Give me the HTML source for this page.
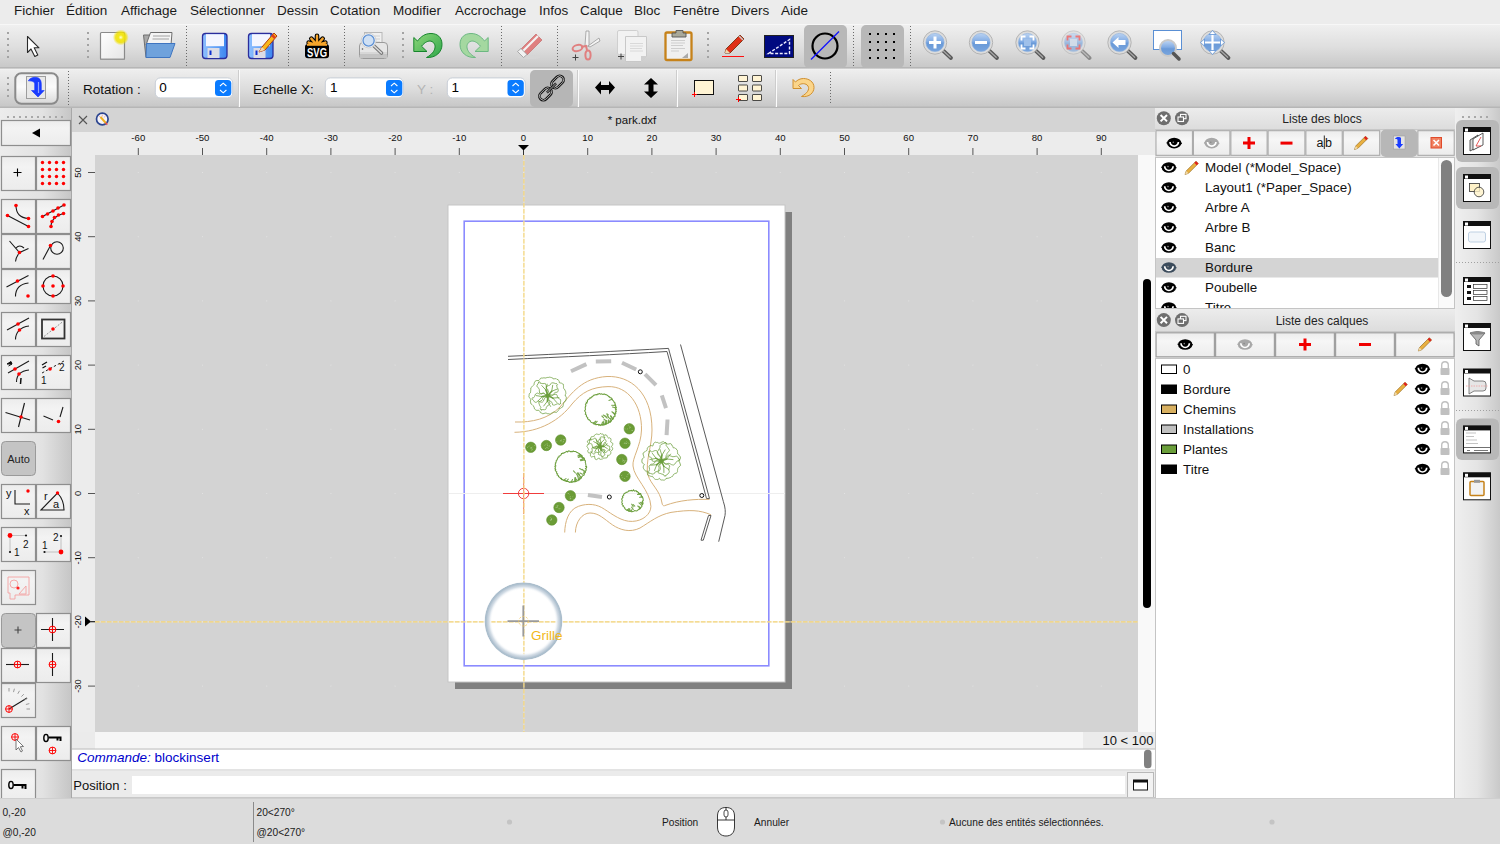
<!DOCTYPE html>
<html><head><meta charset="utf-8">
<style>
*{box-sizing:border-box;margin:0;padding:0}
html,body{width:1500px;height:844px;overflow:hidden;background:#ececec;font-family:"Liberation Sans",sans-serif;color:#000}
.a{position:absolute}
.t{position:absolute;white-space:nowrap}
#menu{left:0;top:0;width:1500px;height:24px;background:#ececec}
#menu span{position:absolute;top:3px;font-size:13.5px;color:#1a1a1a}
#tb1{left:0;top:24px;width:1500px;height:45px;background:linear-gradient(#f7f7f7 0,#f7f7f7 1px,#efefef 1.5px,#dfdfdf 50%,#c9c9c9 calc(100% - 2.5px),#b6b6b6 calc(100% - 1.5px),#b6b6b6 calc(100% - 0.8px),#f4f4f4 100%)}
#tb2{left:0;top:69px;width:1500px;height:39px;background:linear-gradient(#f4f4f4 0,#eeeeee 1px,#dddddd 50%,#c8c8c8 calc(100% - 2px),#b6b6b6 calc(100% - 1px))}
#lt{left:0;top:108px;width:72px;height:692px;background:linear-gradient(90deg,#ececec,#e2e2e2 60%,#c6c6c6);border-right:1px solid #a8a8a8}
#tab{left:72px;top:108px;width:1083px;height:24px;background:#d4d4d4}
#hr{left:72px;top:132px;width:1083px;height:23px;background:#ececec}
#vr{left:72px;top:155px;width:23px;height:577px;background:#ececec}
#cv{left:95px;top:155px;width:1043px;height:577px;background:#d3d3d3;overflow:hidden}
#vsb{left:1138px;top:155px;width:17px;height:577px;background:#f9f9f9}
#hsb{left:72px;top:732px;width:1083px;height:18px;background:#ebebeb}
#cmd{left:72px;top:750px;width:1083px;height:20px;background:#fff;border-top:1px solid #bdbdbd;border-bottom:1px solid #cfcfcf}
#pos{left:72px;top:770px;width:1083px;height:28px;background:#ececec}
#dock{left:1155px;top:108px;width:300px;height:690px;background:#ececec;border-left:1px solid #c8c8c8}
#rtb{left:1455px;top:108px;width:45px;height:690px;background:linear-gradient(90deg,#efefef,#e4e4e4 50%,#c9c9c9)}
#sb{left:0;top:798px;width:1500px;height:46px;background:#dcdcdc;border-top:1px solid #cfcfcf}
</style></head><body>
<div id="menu" class="a">
<span style="left:14px">Fichier</span>
<span style="left:66px">Édition</span>
<span style="left:121px">Affichage</span>
<span style="left:190px">Sélectionner</span>
<span style="left:277px">Dessin</span>
<span style="left:330px">Cotation</span>
<span style="left:393px">Modifier</span>
<span style="left:455px">Accrochage</span>
<span style="left:539px">Infos</span>
<span style="left:580px">Calque</span>
<span style="left:634px">Bloc</span>
<span style="left:673px">Fenêtre</span>
<span style="left:731px">Divers</span>
<span style="left:781px">Aide</span>
</div>
<div id="tb1" class="a"></div>
<div id="tb2" class="a"></div>
<svg class="a" style="left:0;top:0" width="1500" height="107" viewBox="0 0 1500 107">
<defs>
<radialGradient id="glow"><stop offset="0" stop-color="#ffffd8"/><stop offset="0.3" stop-color="#f4e818"/><stop offset="0.65" stop-color="#f0e000" stop-opacity="0.85"/><stop offset="1" stop-color="#f0e000" stop-opacity="0"/></radialGradient>
<linearGradient id="lens" x1="0" y1="0" x2="0" y2="1"><stop offset="0" stop-color="#c2d8f4"/><stop offset="0.45" stop-color="#82ace4"/><stop offset="0.55" stop-color="#6a9ad8"/><stop offset="1" stop-color="#7aa6de"/></linearGradient>
<linearGradient id="flop" x1="0" y1="0" x2="1" y2="0"><stop offset="0" stop-color="#8ec0ff"/><stop offset="1" stop-color="#3c86f0"/></linearGradient>
<linearGradient id="grn" x1="0" y1="0" x2="1" y2="1"><stop offset="0" stop-color="#8fd67a"/><stop offset="1" stop-color="#2ea84a"/></linearGradient>
<linearGradient id="pap" x1="0" y1="0" x2="1" y2="1"><stop offset="0" stop-color="#ffffff"/><stop offset="1" stop-color="#e6e6e6"/></linearGradient>
<g id="mag"><path d="M7.5,7.5 L16,15.5" stroke="#5a5a5a" stroke-width="3.8" stroke-linecap="round"/><path d="M8.5,8.5 L15.2,14.8" stroke="#a8a8a8" stroke-width="1.2" stroke-linecap="round"/><circle cx="0" cy="0" r="10.3" fill="url(#lens)" stroke="#dcdcdc" stroke-width="2.4"/><circle cx="0" cy="0" r="11.7" fill="none" stroke="#a8a8a8" stroke-width="0.8"/><circle cx="0" cy="0" r="9.1" fill="none" stroke="#8ab0e0" stroke-width="0.6"/></g>
</defs>
<!-- toolbar1 handles & separators -->
<g fill="#a3a3a3"><rect x="7" y="32" width="2" height="2"/><rect x="7" y="38" width="2" height="2"/><rect x="7" y="44" width="2" height="2"/><rect x="7" y="50" width="2" height="2"/><rect x="7" y="56" width="2" height="2"/>
<rect x="87" y="32" width="2" height="2"/><rect x="87" y="38" width="2" height="2"/><rect x="87" y="44" width="2" height="2"/><rect x="87" y="50" width="2" height="2"/><rect x="87" y="56" width="2" height="2"/>
<rect x="402" y="32" width="2" height="2"/><rect x="402" y="38" width="2" height="2"/><rect x="402" y="44" width="2" height="2"/><rect x="402" y="50" width="2" height="2"/><rect x="402" y="56" width="2" height="2"/>
<rect x="707" y="32" width="2" height="2"/><rect x="707" y="38" width="2" height="2"/><rect x="707" y="44" width="2" height="2"/><rect x="707" y="50" width="2" height="2"/><rect x="707" y="56" width="2" height="2"/>
<rect x="7" y="77" width="2" height="2"/><rect x="7" y="83" width="2" height="2"/><rect x="7" y="89" width="2" height="2"/><rect x="7" y="95" width="2" height="2"/>
</g>
<g stroke="#6a6a6a" stroke-width="1" stroke-dasharray="1 2">
<path d="M186.5,26 V67"/><path d="M288.5,26 V67"/><path d="M344.5,26 V67"/><path d="M501.5,26 V67"/><path d="M557.5,26 V67"/><path d="M853.5,26 V67"/><path d="M910.5,26 V67"/>
<path d="M68.5,71 V107"/><path d="M830.5,72 V105"/>
</g>
<!-- checked buttons -->
<rect x="804" y="25" width="43" height="43" rx="5" fill="#b8b8b8"/>
<rect x="861" y="25" width="43" height="43" rx="5" fill="#b8b8b8"/>
<!-- cursor -->
<path d="M27.5,36.5 L27.5,52.5 L31,49 L34.8,56.5 L37.8,55 L34.2,47.8 L39,47.8 Z" fill="#fff" stroke="#2a2a2a" stroke-width="1.1" stroke-linejoin="round"/>
<!-- new doc -->
<rect x="100.5" y="32.5" width="24" height="27" rx="1" fill="url(#pap)" stroke="#8a8a8a" stroke-width="1.2"/>
<rect x="100.5" y="58.5" width="24" height="1.5" fill="#999"/>
<circle cx="120.8" cy="37.4" r="8" fill="url(#glow)"/>
<!-- open folder -->
<path d="M143.5,35 L151,35 L151,57.5 L146,57.5 Z" fill="#a8a8a8" stroke="#6e6e6e" stroke-width="1"/>
<path d="M150.5,32.5 L172,32.5 L171,45 L146,45 Z" fill="#f4f4f4" stroke="#6e6e6e" stroke-width="1"/>
<path d="M153,36 H170 M152.5,39 H169" stroke="#bdbdbd" stroke-width="1.3"/>
<path d="M146.5,43.5 L175,43.5 L170,57.5 L146,57.5 Z" fill="#6fa2dc" stroke="#3f75c0" stroke-width="1"/>
<!-- save -->
<g id="flp"><rect x="202.5" y="33.5" width="24.5" height="25" rx="3" fill="url(#flop)" stroke="#2b2d9c" stroke-width="1.3"/>
<rect x="206" y="34.2" width="18" height="12" fill="#f4f6ff"/>
<rect x="207.5" y="48" width="12" height="10" fill="#dcdcE6"/><rect x="209.5" y="50.5" width="2" height="4.5" fill="#1030d0"/>
</g>
<use href="#flp" x="46"/>
<path d="M259,52 L262,47 L274,33 L277,36 L265,50 Z" fill="#f8b81c" stroke="#b23a10" stroke-width="1"/>
<path d="M259,52 L262,47 L265,50 Z" fill="#f0d8b0"/><path d="M272,35 L275,38" stroke="#e04020" stroke-width="2.5"/>
<!-- SVG -->
<g stroke-linecap="round"><path d="M317,45 V35.8 M317,45 L311.3,38.6 M317,45 L322.7,38.6 M317,45 L308.6,42.6 M317,45 L325.4,42.6" stroke="#000" stroke-width="4.6"/>
<path d="M317,45 V35.8 M317,45 L311.3,38.6 M317,45 L322.7,38.6 M317,45 L308.6,42.6 M317,45 L325.4,42.6" stroke="#f7a52b" stroke-width="2.4"/></g>
<rect x="305" y="44" width="24" height="14.3" rx="3" fill="#000"/>
<rect x="307" y="43.8" width="20" height="2" fill="#f7a52b"/>
<text x="317" y="56.8" font-family="Liberation Sans" font-weight="bold" font-size="12" fill="#fff" text-anchor="middle" textLength="20" lengthAdjust="spacingAndGlyphs">SVG</text>
<!-- print preview -->
<rect x="364.5" y="32.5" width="17.5" height="14" fill="#f0f0f0" stroke="#b8b8b8"/>
<path d="M370,36 H380 M370,39 H380 M372,42 H380" stroke="#c8c8c8" stroke-width="0.8"/>
<path d="M359.5,46 Q359.5,42.5 363,42.5 L384,42.5 Q387.5,42.5 387.5,46 L387.5,55.5 Q387.5,58.5 384.5,58.5 L362.5,58.5 Q359.5,58.5 359.5,55.5 Z" fill="#e6e6e6" stroke="#9a9a9a"/>
<path d="M360,53 H387" stroke="#c0c0c0" stroke-width="0.8"/>
<rect x="360" y="54" width="27" height="4" fill="#c4c4c4"/>
<circle cx="362.5" cy="49" r="0.8" fill="#555"/>
<path d="M373.5,45.5 L381.5,53" stroke="#777" stroke-width="3.6" stroke-linecap="round"/>
<path d="M373.5,45.5 L381.5,53" stroke="#ddd" stroke-width="1.4" stroke-linecap="round"/>
<circle cx="368.6" cy="40.5" r="7.4" fill="#f4f4f4" stroke="#c8c8c8" stroke-width="0.8"/>
<circle cx="368.6" cy="40.5" r="5.6" fill="#cfe0f4" stroke="#5b8fd4" stroke-width="1.3"/>
<!-- undo / redo -->
<path d="M413.8,37.5 L413.8,51.5 L427,51.5 L421.5,46.2 C425,42 428.5,40.5 431,41.2 C437,43 437,52 426.5,57.5 C436,58 442,52 442,44.5 C442,37 437,33.5 431,33.5 C425,33.5 421,36.5 417.5,41 Z" fill="url(#grn)" stroke="#16852c" stroke-width="1"/>
<g transform="translate(902,0) scale(-1,1)"><path d="M413.8,37.5 L413.8,51.5 L427,51.5 L421.5,46.2 C425,42 428.5,40.5 431,41.2 C437,43 437,52 426.5,57.5 C436,58 442,52 442,44.5 C442,37 437,33.5 431,33.5 C425,33.5 421,36.5 417.5,41 Z" fill="#a4d8a0" stroke="#6cb882" stroke-width="1"/></g>
<!-- eraser -->
<ellipse cx="529" cy="57" rx="12" ry="2" fill="#d5d5d5"/>
<path d="M521,49 L536,34 L542,40 L527,55 Z" fill="#df8080" stroke="#c06060" stroke-width="0.6"/>
<path d="M523,51 L538,36" stroke="#f4f4f4" stroke-width="2.2"/>
<path d="M517.5,51.5 L521,48.5 L527,54.5 L523.5,57.5 Z" fill="#f2f2f2" stroke="#999" stroke-width="0.8"/>
<!-- cut -->
<path d="M585,46 L586,31 L589,31 L589,46 Z" fill="#f4f4f4" stroke="#9a9a9a" stroke-width="0.8"/>
<path d="M588,46 L599,38 L600,41 L590,47 Z" fill="#f4f4f4" stroke="#9a9a9a" stroke-width="0.8"/>
<ellipse cx="577.5" cy="48" rx="5" ry="3" fill="none" stroke="#e08080" stroke-width="2" transform="rotate(-15 577.5 48)"/>
<ellipse cx="588" cy="55" rx="2.6" ry="4.5" fill="none" stroke="#e08080" stroke-width="2"/>
<path d="M581,47 L586,46 L587,50" stroke="#e08080" stroke-width="2" fill="none"/>
<path d="M572.5,57.5 H578.5 M575.5,54.5 V60.5" stroke="#444" stroke-width="1"/>
<!-- copy -->
<rect x="617.5" y="30.5" width="20.5" height="24" rx="1.5" fill="#f2f2f2" stroke="#cfcfcf"/>
<path d="M626,36.5 H636 M626,42.5 H636" stroke="#ddd" stroke-width="0.6" fill="none"/>
<path d="M625.5,36.5 L646.5,36.5 L646.5,56 L641,61.5 L625.5,61.5 Z" fill="#f2f2f2" stroke="#c8c8c8"/>
<path d="M630,43.5 H643 M630,46 H643 M630,48.5 H642 M630,51 H643" stroke="#d6d6d6" stroke-width="0.9" fill="none"/>
<path d="M641,61.5 L641,56 L646.5,56 Z" fill="#cfcfcf"/>
<path d="M618,56.5 H624 M621,53.5 V59.5" stroke="#444" stroke-width="1"/>
<!-- paste -->
<rect x="665.5" y="32.5" width="26" height="27.5" rx="1.5" fill="#f0f0f0" stroke="#c6821a" stroke-width="2.3"/>
<path d="M676,30.5 H683 V33 H686 V37 H672 V33 H676 Z" fill="#a8a89a" stroke="#555" stroke-width="0.9"/>
<path d="M671,40.5 H685 M671,43 H685 M671,45.5 H683 M671,48.5 H685 M671,51 H679" stroke="#c9c9c9" stroke-width="0.9"/>
<path d="M682,58 L688,53 L688,58 Z" fill="#aaa"/>
<!-- pencil -->
<path d="M725,53 L726,49 L740,35 L744,39 L730,53 Z" fill="#e03018" stroke="#7a3010" stroke-width="0.9"/>
<path d="M725,53 L726,49 L730,53 Z" fill="#f0d8b0"/>
<path d="M739,36 L743,40" stroke="#ccc" stroke-width="1.5"/>
<path d="M722,56.5 H744" stroke="#ff1010" stroke-width="1"/>
<!-- blue box -->
<rect x="764.5" y="35.5" width="29" height="22" fill="#000a80" stroke="#222" stroke-width="1"/>
<path d="M768.5,53.5 L789.5,39.5 L789.5,53.5 Z" fill="none" stroke="#eef" stroke-width="1.4" stroke-dasharray="3 1.6"/>
<!-- circle line -->
<circle cx="825" cy="46" r="12.5" fill="none" stroke="#000" stroke-width="2.2"/>
<path d="M811,59.5 L839,31.5" stroke="#1010ff" stroke-width="1.2"/>
<!-- grid dots -->
<g fill="#000">
<rect x="869" y="33" width="2" height="2"/><rect x="877" y="33" width="2" height="2"/><rect x="885" y="33" width="2" height="2"/><rect x="893" y="33" width="2" height="2"/>
<rect x="869" y="41" width="2" height="2"/><rect x="877" y="41" width="2" height="2"/><rect x="885" y="41" width="2" height="2"/><rect x="893" y="41" width="2" height="2"/>
<rect x="869" y="49" width="2" height="2"/><rect x="877" y="49" width="2" height="2"/><rect x="885" y="49" width="2" height="2"/><rect x="893" y="49" width="2" height="2"/>
<rect x="869" y="57" width="2" height="2"/><rect x="877" y="57" width="2" height="2"/><rect x="885" y="57" width="2" height="2"/><rect x="893" y="57" width="2" height="2"/>
</g>
<!-- zoom icons -->
<g transform="translate(935,42.5)"><use href="#mag"/><path d="M-6,0 H6 M0,-6 V6" stroke="#fff" stroke-width="3"/></g>
<g transform="translate(981,42.5)"><use href="#mag"/><path d="M-6,0 H6" stroke="#fff" stroke-width="3"/></g>
<g transform="translate(1027.5,42.5)"><use href="#mag"/><path d="M-6,-2 V-6 H-2 M2,-6 H6 V-2 M6,2 V6 H2 M-2,6 H-6 V2" stroke="#fff" stroke-width="1.8" fill="none"/><rect x="-3.5" y="-3.5" width="7" height="7" fill="#9fc0ea"/></g>
<g transform="translate(1073.5,42.5)" opacity="0.6"><use href="#mag"/><path d="M-6,-2 V-6 H-2 M2,-6 H6 V-2 M6,2 V6 H2 M-2,6 H-6 V2" stroke="#f03030" stroke-width="1.8" fill="none"/><rect x="-3.5" y="-3.5" width="7" height="7" fill="#c8d8ee"/></g>
<g transform="translate(1119.5,42.5)"><use href="#mag"/><path d="M-7,0 L-1,-5.5 V-2.5 H6 V2.5 H-1 V5.5 Z" fill="#fff"/></g>
<rect x="1153.5" y="30.5" width="28" height="19" fill="#fff" stroke="#5a8fd4" stroke-width="1"/>
<g transform="translate(1168,48)"><circle cx="0" cy="0" r="8" fill="url(#lens)" stroke="#c9c9c9" stroke-width="2"/><path d="M5.5,5.5 L11,11" stroke="#555" stroke-width="3.5" stroke-linecap="round"/></g>
<g transform="translate(1212.5,42.5)"><use href="#mag"/><path d="M-11,0 H11 M0,-11 V11" stroke="#fff" stroke-width="2.2"/><path d="M-12,0 L-8,-3.5 V3.5 Z M12,0 L8,-3.5 V3.5 Z M0,-12 L-3.5,-8 H3.5 Z M0,12 L-3.5,8 H3.5 Z" fill="#fff" stroke="#5b8fd4" stroke-width="0.8"/></g>
</svg>

<svg class="a" style="left:0;top:68px" width="900" height="40" viewBox="0 68 900 40">
<defs>
<linearGradient id="btng" x1="0" y1="0" x2="0" y2="1"><stop offset="0" stop-color="#efefef"/><stop offset="0.45" stop-color="#fbfbfb"/><stop offset="1" stop-color="#d9d9d9"/></linearGradient>
</defs>
<rect x="15.3" y="73.3" width="42.4" height="30.4" rx="6" fill="url(#btng)" stroke="#8a8a8a" stroke-width="2"/>
<rect x="26.5" y="76.5" width="19" height="22" fill="#e8e8e8" stroke="#9d9d9d" stroke-width="1"/>
<path d="M28.3,80.8 C30,77.5 35,76.5 38.5,78 C41,79.5 41.3,82 41.3,85 L41.3,90.5 L44.2,90.5 L38,97 L31.5,90.5 L34.7,90.5 L34.7,84 C34.7,82 33,81 28.3,80.8 Z" fill="#1a3cff" stroke="#1030ff" stroke-width="0.6"/>
<path d="M38.5,82 L38.5,93" stroke="#8fa0ff" stroke-width="1.2"/>
<text x="83" y="93.5" font-family="Liberation Sans" font-size="13.5" fill="#111">Rotation :</text>
<!-- spin 1 -->
<rect x="155.3" y="77.9" width="77.4" height="20" rx="5" fill="#fff" stroke="#c8ced6" stroke-width="1"/>
<rect x="215" y="80" width="16.3" height="16" rx="3.5" fill="#0a7bff"/>
<path d="M220,86 L223.2,83.2 L226.4,86 M220,90 L223.2,92.8 L226.4,90" stroke="#fff" stroke-width="1.1" fill="none"/>
<text x="159.3" y="91.8" font-family="Liberation Sans" font-size="13.5" fill="#000">0</text>
<path d="M238.5,70 V107" stroke="#cdcdcd" stroke-width="1"/><path d="M239.5,70 V107" stroke="#fcfcfc" stroke-width="1"/>
<text x="253" y="93.5" font-family="Liberation Sans" font-size="13.5" fill="#111">Echelle X:</text>
<rect x="325.3" y="77.9" width="78" height="20" rx="5" fill="#fff" stroke="#c8ced6" stroke-width="1"/>
<rect x="386" y="80" width="16.3" height="16" rx="3.5" fill="#0a7bff"/>
<path d="M391,86 L394.2,83.2 L397.4,86 M391,90 L394.2,92.8 L397.4,90" stroke="#fff" stroke-width="1.1" fill="none"/>
<text x="330" y="91.8" font-family="Liberation Sans" font-size="13.5" fill="#000">1</text>
<text x="417" y="93.5" font-family="Liberation Sans" font-size="13.5" fill="#b4b4b4">Y :</text>
<rect x="447.3" y="77.9" width="78" height="20" rx="5" fill="#fff" stroke="#c8ced6" stroke-width="1"/>
<rect x="507.5" y="80" width="16.3" height="16" rx="3.5" fill="#0a7bff"/>
<path d="M512.5,86 L515.7,83.2 L518.9,86 M512.5,90 L515.7,92.8 L518.9,90" stroke="#fff" stroke-width="1.1" fill="none"/>
<text x="451.5" y="91.8" font-family="Liberation Sans" font-size="13.5" fill="#000">1</text>
<!-- link -->
<rect x="530" y="70" width="43" height="37" rx="5" fill="#b6b6b6"/>
<g transform="rotate(-45 551.5 88)" fill="none" stroke="#111">
<rect x="536" y="84" width="14" height="8" rx="4" stroke-width="2.6"/><rect x="536" y="84" width="14" height="8" rx="4" stroke="#b6b6b6" stroke-width="0.9"/>
<rect x="553" y="84" width="14" height="8" rx="4" stroke-width="2.6"/><rect x="553" y="84" width="14" height="8" rx="4" stroke="#b6b6b6" stroke-width="0.9"/>
<path d="M545,88 H558" stroke-width="2.4"/><path d="M545,88 H558" stroke="#b6b6b6" stroke-width="0.9"/>
</g>
<path d="M577.5,70 V107 M676.5,70 V107 M775.5,70 V107" stroke="#cdcdcd" stroke-width="1"/><path d="M578.5,70 V107 M677.5,70 V107 M776.5,70 V107" stroke="#fcfcfc" stroke-width="1"/>
<!-- arrows -->
<path d="M595,87.5 L601,81 L601,85 L609,85 L609,81 L615,87.5 L609,94.5 L609,90 L601,90 L601,94.5 Z" fill="#000"/>
<path d="M651,78 L658,84.5 L653.5,84.5 L653.5,91.5 L658,91.5 L651,98 L644,91.5 L648.5,91.5 L648.5,84.5 L644,84.5 Z" fill="#000"/>
<!-- rect icon -->
<rect x="694.5" y="80.5" width="19" height="14" fill="#fff4d4" stroke="#111" stroke-width="1"/>
<path d="M692,94.5 H697 M694.5,92 V97" stroke="#ff0000" stroke-width="1"/>
<!-- grid icon -->
<g fill="#fff4d4" stroke="#222" stroke-width="0.8">
<rect x="738.5" y="75.5" width="9" height="6" rx="0.5"/><rect x="752.5" y="75.5" width="9" height="6" rx="0.5"/>
<rect x="738.5" y="85" width="9" height="6" rx="0.5"/><rect x="752.5" y="85" width="9" height="6" rx="0.5"/>
<rect x="738.5" y="94.5" width="9" height="6" rx="0.5"/><rect x="752.5" y="94.5" width="9" height="6" rx="0.5"/>
</g>
<path d="M736,99.5 H741 M738.5,97 V102" stroke="#ff0000" stroke-width="1"/>
<!-- orange undo -->
<path d="M793,79.5 L793,88.5 L801.5,88.5 L798.5,85.5 C801,83 806,83 808,86 C810,89.5 807,93.5 801.5,96.5 C809.5,97.5 814,92.5 814,87.5 C814,81.5 808.5,78.5 803.5,78.5 C800,78.5 797.5,80 795.5,82 Z" fill="#fbd58a" stroke="#d09030" stroke-width="1"/>
</svg>

<div id="lt" class="a"></div>
<svg class="a" style="left:0;top:107px" width="72" height="693" viewBox="0 107 72 693">
<defs>
<linearGradient id="bg1" x1="0" y1="0" x2="0" y2="1"><stop offset="0" stop-color="#ececec"/><stop offset="0.3" stop-color="#f3f3f3"/><stop offset="1" stop-color="#ececec"/></linearGradient>
<g id="rc"><circle cx="0" cy="0" r="3.4" fill="none" stroke="#ff0000" stroke-width="1"/><path d="M-3.4,0 H3.4 M0,-3.4 V3.4" stroke="#ff0000" stroke-width="0.9"/></g>
</defs>
<g fill="#a8a8a8"><rect x="7" y="116" width="2" height="2"/><rect x="13" y="116" width="2" height="2"/><rect x="19" y="116" width="2" height="2"/><rect x="25" y="116" width="2" height="2"/><rect x="31" y="116" width="2" height="2"/><rect x="37" y="116" width="2" height="2"/><rect x="43" y="116" width="2" height="2"/><rect x="49" y="116" width="2" height="2"/><rect x="55" y="116" width="2" height="2"/><rect x="61" y="116" width="2" height="2"/></g>
<g fill="url(#bg1)" stroke="#8e8e8e" stroke-width="1.2">
<rect x="1.5" y="120.5" width="69" height="25"/>
<rect x="1.5" y="156.5" width="34" height="34"/><rect x="36.5" y="156.5" width="34" height="34"/>
<rect x="1.5" y="199.5" width="34" height="34"/><rect x="36.5" y="199.5" width="34" height="34"/>
<rect x="1.5" y="234.5" width="34" height="34"/><rect x="36.5" y="234.5" width="34" height="34"/>
<rect x="1.5" y="269.5" width="34" height="34"/><rect x="36.5" y="269.5" width="34" height="34"/>
<rect x="1.5" y="312.5" width="34" height="34"/><rect x="36.5" y="312.5" width="34" height="34"/>
<rect x="1.5" y="355.5" width="34" height="34"/><rect x="36.5" y="355.5" width="34" height="34"/>
<rect x="1.5" y="398.5" width="34" height="34"/><rect x="36.5" y="398.5" width="34" height="34"/>
<rect x="1.5" y="484.5" width="34" height="34"/><rect x="36.5" y="484.5" width="34" height="34"/>
<rect x="1.5" y="527.5" width="34" height="34"/><rect x="36.5" y="527.5" width="34" height="34"/>
<rect x="1.5" y="570.5" width="34" height="34"/>
<rect x="36.5" y="613.5" width="34" height="34"/>
<rect x="1.5" y="648.5" width="34" height="34"/><rect x="36.5" y="648.5" width="34" height="34"/>
<rect x="1.5" y="683.5" width="34" height="34"/>
<rect x="1.5" y="726.5" width="34" height="34"/><rect x="36.5" y="726.5" width="34" height="34"/>
<rect x="1.5" y="769.5" width="34" height="34"/>
</g>
<rect x="1.5" y="441.5" width="34" height="34" rx="4" fill="#c4c4c4" stroke="#9a9a9a" stroke-width="1"/>
<rect x="1.5" y="613.5" width="34" height="34" rx="4" fill="#c4c4c4" stroke="#9a9a9a" stroke-width="1"/>
<text x="18.5" y="462.5" font-family="Liberation Sans" font-size="11" fill="#222" text-anchor="middle">Auto</text>
<path d="M32,133 L40,128.5 L40,137.5 Z" fill="#000"/>
<path d="M13.5,172.5 H21.5 M17.5,168.5 V176.5" stroke="#000" stroke-width="1.1"/>
<g fill="#ff0000">
<circle cx="42.5" cy="162.5" r="1.7"/><circle cx="49.5" cy="162.5" r="1.7"/><circle cx="56.5" cy="162.5" r="1.7"/><circle cx="63.5" cy="162.5" r="1.7"/>
<circle cx="42.5" cy="169.5" r="1.7"/><circle cx="49.5" cy="169.5" r="1.7"/><circle cx="56.5" cy="169.5" r="1.7"/><circle cx="63.5" cy="169.5" r="1.7"/>
<circle cx="42.5" cy="176.5" r="1.7"/><circle cx="49.5" cy="176.5" r="1.7"/><circle cx="56.5" cy="176.5" r="1.7"/><circle cx="63.5" cy="176.5" r="1.7"/>
<circle cx="42.5" cy="183.5" r="1.7"/><circle cx="49.5" cy="183.5" r="1.7"/><circle cx="56.5" cy="183.5" r="1.7"/><circle cx="63.5" cy="183.5" r="1.7"/>
</g>
<g stroke="#1a1a1a" stroke-width="1.1" fill="none">
<path d="M7.5,215.5 L28.5,226.5"/><path d="M16,205.5 C16,214 21,218 28.5,218.5"/>
<path d="M42.5,216.5 L64,205"/><path d="M51,226.5 C51,220 56,215 63.5,213.5"/>
<path d="M9.5,241 L19.5,252.5 L28.5,248.5"/><path d="M19.5,252.5 Q16,257 15.5,261.5"/><path d="M16,248 Q19.5,244 24,248"/>
<circle cx="57" cy="248" r="6.3"/><path d="M43,259.5 L50.5,245.5"/>
<path d="M6.5,287 L28.5,275.5"/><path d="M15.5,296.5 C15.5,289 20,284 28.5,283"/>
<circle cx="53" cy="286" r="10"/>
<path d="M7,330 L29,318"/><path d="M15.5,339.5 C15.5,333 20,327 29,326"/>
<path d="M8,373 L29,361"/><path d="M16.5,382 C16.5,376 20,371 29,370"/>
<path d="M5.5,412.5 L30,420"/><path d="M24.5,403 L18.5,427"/>
<path d="M43.5,416 L53,420"/><path d="M63,407 L60,417"/>
<path d="M15,490 V504 H30"/>
<path d="M41,510 L57.5,493 Q64,500 64,510 Z"/>
<path d="M6,664.5 H29"/><path d="M52.5,653 V676"/>
<path d="M41,629.5 H64 M52.5,618 V641"/>
<path d="M9,709 L27,698"/>
</g>
<rect x="42" y="319.5" width="22.5" height="19" fill="none" stroke="#333" stroke-width="1.8"/>
<path d="M44,336.5 L63,321.5" stroke="#777" stroke-width="0.8" stroke-dasharray="2 1.5"/>
<path d="M42,373 L64,361" stroke="#222" stroke-width="1" stroke-dasharray="2.5 2"/>
<path d="M7,364 L11,361.5 L12,364 Z M8.5,366 L12,364" fill="#111" stroke="#111" stroke-width="1"/>
<path d="M20.5,384 L21,378" stroke="#111" stroke-width="1.5"/>
<path d="M42,365 L47,362 M42.5,368 L46,366" stroke="#111" stroke-width="1.3"/>
<text x="41" y="384" font-family="Liberation Sans" font-size="10" fill="#111">1</text>
<text x="59" y="371" font-family="Liberation Sans" font-size="10" fill="#111">2</text>
<g fill="#ff0000">
<circle cx="16" cy="205.5" r="1.8"/><circle cx="28.5" cy="218.5" r="1.8"/><circle cx="7.5" cy="215.5" r="1.8"/><circle cx="28.5" cy="226.5" r="1.8"/>
<circle cx="42.5" cy="216.5" r="1.8"/><circle cx="47.5" cy="214" r="1.8"/><circle cx="53" cy="211" r="1.8"/><circle cx="58" cy="208" r="1.8"/><circle cx="64" cy="205" r="1.8"/>
<circle cx="51" cy="226.5" r="1.8"/><circle cx="52" cy="221.5" r="1.8"/><circle cx="54.5" cy="217.5" r="1.8"/><circle cx="58.5" cy="215" r="1.8"/><circle cx="63.5" cy="213.5" r="1.8"/>
<circle cx="19.5" cy="252.5" r="1.8"/><circle cx="50.5" cy="245.5" r="1.8"/>
<circle cx="17.5" cy="281" r="1.8"/><circle cx="28" cy="296" r="1.8"/>
<circle cx="53" cy="286" r="1.8"/><circle cx="43" cy="286" r="1.8"/><circle cx="63" cy="286" r="1.8"/><circle cx="53" cy="276" r="1.8"/><circle cx="53" cy="296" r="1.8"/>
<circle cx="18" cy="324" r="1.8"/><circle cx="19.5" cy="330" r="1.8"/>
<circle cx="53" cy="329" r="1.8"/>
<circle cx="15" cy="369" r="1.8"/><circle cx="19" cy="374" r="1.8"/>
<circle cx="50" cy="369" r="1.8"/>
<circle cx="21" cy="417" r="1.8"/><circle cx="58.5" cy="421.5" r="1.8"/>
<circle cx="28" cy="491" r="1.7"/><circle cx="57.5" cy="493" r="1.7"/>
</g>
<text x="6" y="497" font-family="Liberation Sans" font-size="11" fill="#111">y</text>
<text x="24" y="515" font-family="Liberation Sans" font-size="11" fill="#111">x</text>
<text x="44" y="500" font-family="Liberation Sans" font-size="11" fill="#111">r</text>
<text x="53" y="507.5" font-family="Liberation Sans" font-size="11" fill="#111">a</text>
<path d="M10,535.5 H26 M10,535.5 V552" fill="none" stroke="#bbb" stroke-width="0.9"/><path d="M44.5,552 H61 V536" fill="none" stroke="#bbb" stroke-width="0.9"/>
<circle cx="10" cy="535.5" r="2.4" fill="#ff0000"/><circle cx="61" cy="552" r="2.4" fill="#ff0000"/>
<g fill="#111"><circle cx="26" cy="535.5" r="1.1"/><circle cx="10" cy="552" r="1.1"/><circle cx="61" cy="536" r="1.1"/><circle cx="44.5" cy="552" r="1.1"/></g>
<text x="23" y="548" font-family="Liberation Sans" font-size="10" fill="#111">2</text>
<text x="14" y="556" font-family="Liberation Sans" font-size="10" fill="#111">1</text>
<text x="53" y="541" font-family="Liberation Sans" font-size="10" fill="#111">2</text>
<text x="42" y="549" font-family="Liberation Sans" font-size="10" fill="#111">1</text>
<g fill="none" stroke="#f4a0a0" stroke-width="0.9"><path d="M8,577 H29 V595 H15 V599 H10 V593 H8 Z"/><circle cx="14" cy="584" r="4"/><path d="M19,594 L26,586 V594 Z"/></g>
<circle cx="18" cy="588" r="1.6" fill="#ff2020"/>
<path d="M14.5,630 H21.5 M18,626.5 V633.5" stroke="#444" stroke-width="1.1"/>
<use href="#rc" x="52.5" y="629.5"/><use href="#rc" x="17.5" y="664.5"/><use href="#rc" x="52.5" y="664.5"/>
<g stroke="#9a9a9a" stroke-width="1"><path d="M9.0,691.5 L9.0,688.0 M13.5,692.1 L14.4,688.7 M17.8,693.8 L19.5,690.8 M21.4,696.6 L23.8,694.2 M24.2,700.2 L27.2,698.5 M25.9,704.5 L29.3,703.6 M26.5,709.0 L30.0,709.0"/></g>
<use href="#rc" x="9" y="709"/>
<use href="#rc" x="15" y="737"/>
<path d="M16,739 L16,750 L18.5,747.5 L21,752 L22.5,751 L20.3,746.7 L23.5,746.5 Z" fill="#fff" stroke="#555" stroke-width="0.8"/>
<g fill="none" stroke="#000"><ellipse cx="46" cy="738" rx="2.2" ry="3.6" stroke-width="1.4"/><path d="M48.5,737.5 H60.5 V741 M57.5,737.5 V740.5" stroke-width="2"/></g>
<use href="#rc" x="52.5" y="750.5"/>
<g fill="none" stroke="#000"><ellipse cx="11" cy="785" rx="2.2" ry="3.6" stroke-width="1.4"/><path d="M13.5,785 H25.5 V789 M22.5,785 V788.5" stroke-width="2"/></g>
</svg>

<div id="tab" class="a"></div>
<div id="hr" class="a"></div>
<div id="vr" class="a"></div>
<div id="cv" class="a"></div>
<div id="vsb" class="a"></div>
<div id="hsb" class="a"></div>
<div id="cmd" class="a"></div>
<div id="pos" class="a"></div>
<svg class="a" style="left:72px;top:107px" width="1083" height="693" viewBox="72 107 1083 693">
<defs><radialGradient id="magr" cx="0.5" cy="0.5" r="0.5"><stop offset="0" stop-color="#fff" stop-opacity="0"/><stop offset="0.8" stop-color="#fff" stop-opacity="0"/><stop offset="0.85" stop-color="#eef2f6" stop-opacity="0.85"/><stop offset="0.89" stop-color="#d2dce5"/><stop offset="0.92" stop-color="#c4d0dc"/><stop offset="0.95" stop-color="#b0c2d0"/><stop offset="0.98" stop-color="#a9bccb"/><stop offset="1" stop-color="#c0ccd8" stop-opacity="0.5"/></radialGradient>
<clipPath id="cvclip"><rect x="95" y="155" width="1043" height="577"/></clipPath></defs>
<path d="M79,116 L87,124 M87,116 L79,124" stroke="#555" stroke-width="1.1"/>
<circle cx="102.3" cy="119" r="5.8" fill="#f4f4f8" stroke="#2c4590" stroke-width="1.7"/><path d="M99,116 L101,117.5 M102.3,114.5 V116.5 M105.5,116 L103.8,117.5" stroke="#d88" stroke-width="0.6"/><path d="M100.5,117 L105.8,123" stroke="#f0b020" stroke-width="2"/><path d="M105.5,122.7 L107.3,124.6" stroke="#e05050" stroke-width="1.6"/>
<text x="632" y="123.5" font-family="Liberation Sans" font-size="11.5" text-anchor="middle" fill="#111">* park.dxf</text>
<path d="M138.3,148 V155" stroke="#555" stroke-width="1"/>
<text x="138.3" y="141.3" font-family="Liberation Sans" font-size="9.6" text-anchor="middle" fill="#111">-60</text>
<path d="M202.5,148 V155" stroke="#555" stroke-width="1"/>
<text x="202.5" y="141.3" font-family="Liberation Sans" font-size="9.6" text-anchor="middle" fill="#111">-50</text>
<path d="M266.7,148 V155" stroke="#555" stroke-width="1"/>
<text x="266.7" y="141.3" font-family="Liberation Sans" font-size="9.6" text-anchor="middle" fill="#111">-40</text>
<path d="M330.9,148 V155" stroke="#555" stroke-width="1"/>
<text x="330.9" y="141.3" font-family="Liberation Sans" font-size="9.6" text-anchor="middle" fill="#111">-30</text>
<path d="M395.1,148 V155" stroke="#555" stroke-width="1"/>
<text x="395.1" y="141.3" font-family="Liberation Sans" font-size="9.6" text-anchor="middle" fill="#111">-20</text>
<path d="M459.3,148 V155" stroke="#555" stroke-width="1"/>
<text x="459.3" y="141.3" font-family="Liberation Sans" font-size="9.6" text-anchor="middle" fill="#111">-10</text>
<path d="M523.5,148 V155" stroke="#555" stroke-width="1"/>
<text x="523.5" y="141.3" font-family="Liberation Sans" font-size="9.6" text-anchor="middle" fill="#111">0</text>
<path d="M587.7,148 V155" stroke="#555" stroke-width="1"/>
<text x="587.7" y="141.3" font-family="Liberation Sans" font-size="9.6" text-anchor="middle" fill="#111">10</text>
<path d="M651.9,148 V155" stroke="#555" stroke-width="1"/>
<text x="651.9" y="141.3" font-family="Liberation Sans" font-size="9.6" text-anchor="middle" fill="#111">20</text>
<path d="M716.1,148 V155" stroke="#555" stroke-width="1"/>
<text x="716.1" y="141.3" font-family="Liberation Sans" font-size="9.6" text-anchor="middle" fill="#111">30</text>
<path d="M780.3,148 V155" stroke="#555" stroke-width="1"/>
<text x="780.3" y="141.3" font-family="Liberation Sans" font-size="9.6" text-anchor="middle" fill="#111">40</text>
<path d="M844.5,148 V155" stroke="#555" stroke-width="1"/>
<text x="844.5" y="141.3" font-family="Liberation Sans" font-size="9.6" text-anchor="middle" fill="#111">50</text>
<path d="M908.7,148 V155" stroke="#555" stroke-width="1"/>
<text x="908.7" y="141.3" font-family="Liberation Sans" font-size="9.6" text-anchor="middle" fill="#111">60</text>
<path d="M972.9,148 V155" stroke="#555" stroke-width="1"/>
<text x="972.9" y="141.3" font-family="Liberation Sans" font-size="9.6" text-anchor="middle" fill="#111">70</text>
<path d="M1037.1,148 V155" stroke="#555" stroke-width="1"/>
<text x="1037.1" y="141.3" font-family="Liberation Sans" font-size="9.6" text-anchor="middle" fill="#111">80</text>
<path d="M1101.3,148 V155" stroke="#555" stroke-width="1"/>
<text x="1101.3" y="141.3" font-family="Liberation Sans" font-size="9.6" text-anchor="middle" fill="#111">90</text>
<path d="M518,145 L529,145 L523.5,150.5 Z" fill="#000"/><path d="M523.5,150 V155" stroke="#333"/>
<path d="M88,686.1 H95" stroke="#555" stroke-width="1"/>
<text transform="translate(81.2,686.1) rotate(-90)" font-family="Liberation Sans" font-size="9.3" text-anchor="middle" fill="#111">-30</text>
<path d="M88,621.9 H95" stroke="#555" stroke-width="1"/>
<text transform="translate(81.2,621.9) rotate(-90)" font-family="Liberation Sans" font-size="9.3" text-anchor="middle" fill="#111">-20</text>
<path d="M88,557.7 H95" stroke="#555" stroke-width="1"/>
<text transform="translate(81.2,557.7) rotate(-90)" font-family="Liberation Sans" font-size="9.3" text-anchor="middle" fill="#111">-10</text>
<path d="M88,493.5 H95" stroke="#555" stroke-width="1"/>
<text transform="translate(81.2,493.5) rotate(-90)" font-family="Liberation Sans" font-size="9.3" text-anchor="middle" fill="#111">0</text>
<path d="M88,429.3 H95" stroke="#555" stroke-width="1"/>
<text transform="translate(81.2,429.3) rotate(-90)" font-family="Liberation Sans" font-size="9.3" text-anchor="middle" fill="#111">10</text>
<path d="M88,365.1 H95" stroke="#555" stroke-width="1"/>
<text transform="translate(81.2,365.1) rotate(-90)" font-family="Liberation Sans" font-size="9.3" text-anchor="middle" fill="#111">20</text>
<path d="M88,300.9 H95" stroke="#555" stroke-width="1"/>
<text transform="translate(81.2,300.9) rotate(-90)" font-family="Liberation Sans" font-size="9.3" text-anchor="middle" fill="#111">30</text>
<path d="M88,236.7 H95" stroke="#555" stroke-width="1"/>
<text transform="translate(81.2,236.7) rotate(-90)" font-family="Liberation Sans" font-size="9.3" text-anchor="middle" fill="#111">40</text>
<path d="M88,172.5 H95" stroke="#555" stroke-width="1"/>
<text transform="translate(81.2,172.5) rotate(-90)" font-family="Liberation Sans" font-size="9.3" text-anchor="middle" fill="#111">50</text>
<path d="M85,616.5 L91,621.5 L85,626.5 Z" fill="#000"/><path d="M90,621.5 H95" stroke="#333"/>
<g clip-path="url(#cvclip)">
<rect x="137.8" y="685.6" width="1" height="1" fill="#e2e2e2"/>
<rect x="137.8" y="621.4" width="1" height="1" fill="#e2e2e2"/>
<rect x="137.8" y="557.2" width="1" height="1" fill="#e2e2e2"/>
<rect x="137.8" y="493.0" width="1" height="1" fill="#e2e2e2"/>
<rect x="137.8" y="428.8" width="1" height="1" fill="#e2e2e2"/>
<rect x="137.8" y="364.6" width="1" height="1" fill="#e2e2e2"/>
<rect x="137.8" y="300.4" width="1" height="1" fill="#e2e2e2"/>
<rect x="137.8" y="236.2" width="1" height="1" fill="#e2e2e2"/>
<rect x="137.8" y="172.0" width="1" height="1" fill="#e2e2e2"/>
<rect x="202.0" y="685.6" width="1" height="1" fill="#e2e2e2"/>
<rect x="202.0" y="621.4" width="1" height="1" fill="#e2e2e2"/>
<rect x="202.0" y="557.2" width="1" height="1" fill="#e2e2e2"/>
<rect x="202.0" y="493.0" width="1" height="1" fill="#e2e2e2"/>
<rect x="202.0" y="428.8" width="1" height="1" fill="#e2e2e2"/>
<rect x="202.0" y="364.6" width="1" height="1" fill="#e2e2e2"/>
<rect x="202.0" y="300.4" width="1" height="1" fill="#e2e2e2"/>
<rect x="202.0" y="236.2" width="1" height="1" fill="#e2e2e2"/>
<rect x="202.0" y="172.0" width="1" height="1" fill="#e2e2e2"/>
<rect x="266.2" y="685.6" width="1" height="1" fill="#e2e2e2"/>
<rect x="266.2" y="621.4" width="1" height="1" fill="#e2e2e2"/>
<rect x="266.2" y="557.2" width="1" height="1" fill="#e2e2e2"/>
<rect x="266.2" y="493.0" width="1" height="1" fill="#e2e2e2"/>
<rect x="266.2" y="428.8" width="1" height="1" fill="#e2e2e2"/>
<rect x="266.2" y="364.6" width="1" height="1" fill="#e2e2e2"/>
<rect x="266.2" y="300.4" width="1" height="1" fill="#e2e2e2"/>
<rect x="266.2" y="236.2" width="1" height="1" fill="#e2e2e2"/>
<rect x="266.2" y="172.0" width="1" height="1" fill="#e2e2e2"/>
<rect x="330.4" y="685.6" width="1" height="1" fill="#e2e2e2"/>
<rect x="330.4" y="621.4" width="1" height="1" fill="#e2e2e2"/>
<rect x="330.4" y="557.2" width="1" height="1" fill="#e2e2e2"/>
<rect x="330.4" y="493.0" width="1" height="1" fill="#e2e2e2"/>
<rect x="330.4" y="428.8" width="1" height="1" fill="#e2e2e2"/>
<rect x="330.4" y="364.6" width="1" height="1" fill="#e2e2e2"/>
<rect x="330.4" y="300.4" width="1" height="1" fill="#e2e2e2"/>
<rect x="330.4" y="236.2" width="1" height="1" fill="#e2e2e2"/>
<rect x="330.4" y="172.0" width="1" height="1" fill="#e2e2e2"/>
<rect x="394.6" y="685.6" width="1" height="1" fill="#e2e2e2"/>
<rect x="394.6" y="621.4" width="1" height="1" fill="#e2e2e2"/>
<rect x="394.6" y="557.2" width="1" height="1" fill="#e2e2e2"/>
<rect x="394.6" y="493.0" width="1" height="1" fill="#e2e2e2"/>
<rect x="394.6" y="428.8" width="1" height="1" fill="#e2e2e2"/>
<rect x="394.6" y="364.6" width="1" height="1" fill="#e2e2e2"/>
<rect x="394.6" y="300.4" width="1" height="1" fill="#e2e2e2"/>
<rect x="394.6" y="236.2" width="1" height="1" fill="#e2e2e2"/>
<rect x="394.6" y="172.0" width="1" height="1" fill="#e2e2e2"/>
<rect x="458.8" y="685.6" width="1" height="1" fill="#e2e2e2"/>
<rect x="458.8" y="621.4" width="1" height="1" fill="#e2e2e2"/>
<rect x="458.8" y="557.2" width="1" height="1" fill="#e2e2e2"/>
<rect x="458.8" y="493.0" width="1" height="1" fill="#e2e2e2"/>
<rect x="458.8" y="428.8" width="1" height="1" fill="#e2e2e2"/>
<rect x="458.8" y="364.6" width="1" height="1" fill="#e2e2e2"/>
<rect x="458.8" y="300.4" width="1" height="1" fill="#e2e2e2"/>
<rect x="458.8" y="236.2" width="1" height="1" fill="#e2e2e2"/>
<rect x="458.8" y="172.0" width="1" height="1" fill="#e2e2e2"/>
<rect x="523.0" y="685.6" width="1" height="1" fill="#e2e2e2"/>
<rect x="523.0" y="621.4" width="1" height="1" fill="#e2e2e2"/>
<rect x="523.0" y="557.2" width="1" height="1" fill="#e2e2e2"/>
<rect x="523.0" y="493.0" width="1" height="1" fill="#e2e2e2"/>
<rect x="523.0" y="428.8" width="1" height="1" fill="#e2e2e2"/>
<rect x="523.0" y="364.6" width="1" height="1" fill="#e2e2e2"/>
<rect x="523.0" y="300.4" width="1" height="1" fill="#e2e2e2"/>
<rect x="523.0" y="236.2" width="1" height="1" fill="#e2e2e2"/>
<rect x="523.0" y="172.0" width="1" height="1" fill="#e2e2e2"/>
<rect x="587.2" y="685.6" width="1" height="1" fill="#e2e2e2"/>
<rect x="587.2" y="621.4" width="1" height="1" fill="#e2e2e2"/>
<rect x="587.2" y="557.2" width="1" height="1" fill="#e2e2e2"/>
<rect x="587.2" y="493.0" width="1" height="1" fill="#e2e2e2"/>
<rect x="587.2" y="428.8" width="1" height="1" fill="#e2e2e2"/>
<rect x="587.2" y="364.6" width="1" height="1" fill="#e2e2e2"/>
<rect x="587.2" y="300.4" width="1" height="1" fill="#e2e2e2"/>
<rect x="587.2" y="236.2" width="1" height="1" fill="#e2e2e2"/>
<rect x="587.2" y="172.0" width="1" height="1" fill="#e2e2e2"/>
<rect x="651.4" y="685.6" width="1" height="1" fill="#e2e2e2"/>
<rect x="651.4" y="621.4" width="1" height="1" fill="#e2e2e2"/>
<rect x="651.4" y="557.2" width="1" height="1" fill="#e2e2e2"/>
<rect x="651.4" y="493.0" width="1" height="1" fill="#e2e2e2"/>
<rect x="651.4" y="428.8" width="1" height="1" fill="#e2e2e2"/>
<rect x="651.4" y="364.6" width="1" height="1" fill="#e2e2e2"/>
<rect x="651.4" y="300.4" width="1" height="1" fill="#e2e2e2"/>
<rect x="651.4" y="236.2" width="1" height="1" fill="#e2e2e2"/>
<rect x="651.4" y="172.0" width="1" height="1" fill="#e2e2e2"/>
<rect x="715.6" y="685.6" width="1" height="1" fill="#e2e2e2"/>
<rect x="715.6" y="621.4" width="1" height="1" fill="#e2e2e2"/>
<rect x="715.6" y="557.2" width="1" height="1" fill="#e2e2e2"/>
<rect x="715.6" y="493.0" width="1" height="1" fill="#e2e2e2"/>
<rect x="715.6" y="428.8" width="1" height="1" fill="#e2e2e2"/>
<rect x="715.6" y="364.6" width="1" height="1" fill="#e2e2e2"/>
<rect x="715.6" y="300.4" width="1" height="1" fill="#e2e2e2"/>
<rect x="715.6" y="236.2" width="1" height="1" fill="#e2e2e2"/>
<rect x="715.6" y="172.0" width="1" height="1" fill="#e2e2e2"/>
<rect x="779.8" y="685.6" width="1" height="1" fill="#e2e2e2"/>
<rect x="779.8" y="621.4" width="1" height="1" fill="#e2e2e2"/>
<rect x="779.8" y="557.2" width="1" height="1" fill="#e2e2e2"/>
<rect x="779.8" y="493.0" width="1" height="1" fill="#e2e2e2"/>
<rect x="779.8" y="428.8" width="1" height="1" fill="#e2e2e2"/>
<rect x="779.8" y="364.6" width="1" height="1" fill="#e2e2e2"/>
<rect x="779.8" y="300.4" width="1" height="1" fill="#e2e2e2"/>
<rect x="779.8" y="236.2" width="1" height="1" fill="#e2e2e2"/>
<rect x="779.8" y="172.0" width="1" height="1" fill="#e2e2e2"/>
<rect x="844.0" y="685.6" width="1" height="1" fill="#e2e2e2"/>
<rect x="844.0" y="621.4" width="1" height="1" fill="#e2e2e2"/>
<rect x="844.0" y="557.2" width="1" height="1" fill="#e2e2e2"/>
<rect x="844.0" y="493.0" width="1" height="1" fill="#e2e2e2"/>
<rect x="844.0" y="428.8" width="1" height="1" fill="#e2e2e2"/>
<rect x="844.0" y="364.6" width="1" height="1" fill="#e2e2e2"/>
<rect x="844.0" y="300.4" width="1" height="1" fill="#e2e2e2"/>
<rect x="844.0" y="236.2" width="1" height="1" fill="#e2e2e2"/>
<rect x="844.0" y="172.0" width="1" height="1" fill="#e2e2e2"/>
<rect x="908.2" y="685.6" width="1" height="1" fill="#e2e2e2"/>
<rect x="908.2" y="621.4" width="1" height="1" fill="#e2e2e2"/>
<rect x="908.2" y="557.2" width="1" height="1" fill="#e2e2e2"/>
<rect x="908.2" y="493.0" width="1" height="1" fill="#e2e2e2"/>
<rect x="908.2" y="428.8" width="1" height="1" fill="#e2e2e2"/>
<rect x="908.2" y="364.6" width="1" height="1" fill="#e2e2e2"/>
<rect x="908.2" y="300.4" width="1" height="1" fill="#e2e2e2"/>
<rect x="908.2" y="236.2" width="1" height="1" fill="#e2e2e2"/>
<rect x="908.2" y="172.0" width="1" height="1" fill="#e2e2e2"/>
<rect x="972.4" y="685.6" width="1" height="1" fill="#e2e2e2"/>
<rect x="972.4" y="621.4" width="1" height="1" fill="#e2e2e2"/>
<rect x="972.4" y="557.2" width="1" height="1" fill="#e2e2e2"/>
<rect x="972.4" y="493.0" width="1" height="1" fill="#e2e2e2"/>
<rect x="972.4" y="428.8" width="1" height="1" fill="#e2e2e2"/>
<rect x="972.4" y="364.6" width="1" height="1" fill="#e2e2e2"/>
<rect x="972.4" y="300.4" width="1" height="1" fill="#e2e2e2"/>
<rect x="972.4" y="236.2" width="1" height="1" fill="#e2e2e2"/>
<rect x="972.4" y="172.0" width="1" height="1" fill="#e2e2e2"/>
<rect x="1036.6" y="685.6" width="1" height="1" fill="#e2e2e2"/>
<rect x="1036.6" y="621.4" width="1" height="1" fill="#e2e2e2"/>
<rect x="1036.6" y="557.2" width="1" height="1" fill="#e2e2e2"/>
<rect x="1036.6" y="493.0" width="1" height="1" fill="#e2e2e2"/>
<rect x="1036.6" y="428.8" width="1" height="1" fill="#e2e2e2"/>
<rect x="1036.6" y="364.6" width="1" height="1" fill="#e2e2e2"/>
<rect x="1036.6" y="300.4" width="1" height="1" fill="#e2e2e2"/>
<rect x="1036.6" y="236.2" width="1" height="1" fill="#e2e2e2"/>
<rect x="1036.6" y="172.0" width="1" height="1" fill="#e2e2e2"/>
<rect x="1100.8" y="685.6" width="1" height="1" fill="#e2e2e2"/>
<rect x="1100.8" y="621.4" width="1" height="1" fill="#e2e2e2"/>
<rect x="1100.8" y="557.2" width="1" height="1" fill="#e2e2e2"/>
<rect x="1100.8" y="493.0" width="1" height="1" fill="#e2e2e2"/>
<rect x="1100.8" y="428.8" width="1" height="1" fill="#e2e2e2"/>
<rect x="1100.8" y="364.6" width="1" height="1" fill="#e2e2e2"/>
<rect x="1100.8" y="300.4" width="1" height="1" fill="#e2e2e2"/>
<rect x="1100.8" y="236.2" width="1" height="1" fill="#e2e2e2"/>
<rect x="1100.8" y="172.0" width="1" height="1" fill="#e2e2e2"/>
<rect x="455" y="212" width="337" height="477" fill="#808080"/>
<rect x="448" y="205" width="337" height="477" fill="#fff" stroke="#c6c6c6" stroke-width="1"/>
<rect x="464.2" y="221.2" width="304.6" height="444.6" fill="none" stroke="#8b8bff" stroke-width="1.6"/>
<path d="M449,493.5 H785" stroke="#eeeeee" stroke-width="1"/>
<g fill="none" stroke="#5a5a5a" stroke-width="1">
<path d="M508,356.3 C560,354 620,351 668.5,348.4 L709.5,498.5"/>
<path d="M508,359.5 C560,357 620,354.5 667,351.5 L706.5,498.5 L709.5,498.5"/>
<path d="M711,515.5 L703.3,540.2 M708.5,515.5 L701,540.2 M708.5,515.5 H711 M701,540.2 H703.3"/>
<path d="M680.5,344.5 L723.4,501.7 C725.5,508 725.5,512 725,515.5 L718.7,541.7"/>
</g>
<g fill="none" stroke="#d8b27c" stroke-width="1">
<path d="M515,422 C532,422.5 548,419 560,407 C572,393 582,378 607,376.5 C630,375.5 652,392 652,430 C652,446 645,462 648,475 C651,485 660,490 662,503 C662.5,506 664,506 665,505.5 C680,500 695,499 709.5,499.4"/>
<path d="M514.5,432.3 C540,432 560,420 572,404 C582,392 592,387 608,386.6 C628,386 642,405 641.5,430 C641,446 632,458 633,466 C634,478 650,490 650.9,506.3 C651,514 643,521 632.4,521.4 C622,522 612,514 604.7,509.4 C597,504 588,503 578.5,506.3 C568,510 565,522 564.7,532.5"/>
<path d="M711,514.8 C700,510 690,509.5 671,512.4 C658,515 650,522 640,528 C630,533 620,530 612.4,524.8 C604,519 599,513 590,513 C582,513 575.5,522 575.4,532.5"/>
</g>
<g stroke="#c2c2c2" stroke-width="4" stroke-linecap="butt">
<path d="M571,371.2 L586.4,364.1"/>
<path d="M595.8,361.5 L611.2,361.2"/>
<path d="M622,362.8 L636.2,369.5"/>
<path d="M645,374.2 L656,385.2"/>
<path d="M661.8,395.3 L666,408.1"/>
<path d="M667.5,419.5 L666.6,435.2"/>
<path d="M587.9,494.9 L602,496.9"/>
</g>
<circle cx="640.3" cy="371.8" r="2" fill="#fff" stroke="#111" stroke-width="1"/>
<circle cx="609.3" cy="497" r="2" fill="#fff" stroke="#111" stroke-width="1"/>
<circle cx="701.8" cy="495.5" r="2" fill="#fff" stroke="#111" stroke-width="1"/>
<g fill="none" stroke="#6b9e3c" stroke-width="0.75">
<path d="M565.00,395.50 L565.76,396.44 L566.33,397.45 L566.23,398.42 L566.03,399.37 L566.10,400.40 L564.92,401.06 L564.74,402.00 L563.68,402.57 L563.55,403.53 L563.39,404.50 L563.20,405.50 L563.00,406.55 L562.00,407.00 L561.42,407.76 L560.55,408.25 L559.20,408.16 L559.04,409.39 L558.45,410.16 L557.89,411.03 L557.18,411.75 L556.41,412.39 L555.28,412.29 L554.14,412.03 L553.25,412.29 L552.44,412.80 L551.56,413.20 L550.72,413.91 L549.75,414.05 L548.76,413.73 L547.80,413.79 L546.86,413.44 L545.97,412.89 L544.98,413.29 L544.01,413.35 L542.86,413.94 L542.05,413.20 L541.10,412.95 L540.25,412.47 L539.80,411.19 L539.13,410.53 L538.23,410.23 L536.95,410.43 L535.95,410.13 L535.22,409.47 L534.44,408.86 L534.27,407.68 L533.79,406.84 L533.50,405.89 L532.70,405.30 L532.03,404.60 L531.17,403.97 L530.62,403.15 L530.61,402.10 L530.35,401.17 L530.76,400.06 L530.79,399.11 L530.06,398.31 L529.17,397.46 L528.87,396.49 L529.09,395.50 L529.17,394.52 L529.40,393.57 L530.49,392.76 L530.59,391.84 L530.69,390.91 L530.72,389.95 L530.90,389.01 L530.75,387.91 L531.62,387.26 L532.17,386.47 L532.81,385.77 L533.59,385.18 L534.14,384.44 L534.18,383.24 L534.56,382.26 L535.04,381.33 L535.90,380.81 L536.86,380.44 L538.15,380.64 L539.03,380.31 L539.70,379.60 L540.27,378.59 L541.08,377.99 L542.16,378.13 L543.09,377.91 L544.05,377.84 L545.02,377.96 L545.96,378.03 L546.86,377.52 L547.80,377.42 L548.75,377.42 L549.73,377.14 L550.67,377.37 L551.60,377.61 L552.53,377.87 L553.19,378.91 L554.21,378.80 L555.30,378.66 L556.34,378.75 L557.04,379.50 L558.12,379.60 L558.70,380.49 L559.22,381.40 L559.31,382.72 L560.33,382.97 L561.49,383.18 L562.31,383.75 L563.34,384.21 L563.44,385.35 L563.55,386.41 L563.48,387.51 L563.62,388.46 L564.44,389.11 L564.87,389.96 L565.31,390.81 L565.70,391.69 L565.77,392.65 L565.86,393.60 L565.38,394.58 L565.45,395.50Z"/>
<path d="M560.64,403.39 L560.12,404.11 L559.74,404.38 L559.19,404.71 L558.90,404.42 L558.70,403.78 L558.04,403.71 L557.16,403.84 L555.90,404.44 L554.55,405.06 L553.52,405.09 L552.61,404.87 L552.35,403.58 L552.00,402.43 L551.21,402.01 L550.66,401.27 L550.00,400.79 L549.17,400.69 L548.91,399.83 L548.67,399.08 L548.71,398.06 L548.99,396.86 L549.14,396.07 L549.15,395.71 L548.86,396.07 L549.23,395.59 L549.88,394.88 L550.11,395.05 L550.44,395.29 L550.66,395.89 L551.28,396.02 L552.48,395.39 L553.79,394.71 L555.01,394.28 L556.06,394.23 L556.79,394.73 L557.24,395.72 L557.47,397.07 L558.06,397.81 L558.69,398.42 L559.37,398.86 L560.07,399.17 L560.57,399.64 L560.65,400.66 L560.60,401.68 L560.45,402.69 L560.19,403.66 L560.47,403.54 L560.74,403.22Z"/>
<path d="M541.57,410.11 L540.81,409.71 L540.35,409.31 L540.14,408.87 L540.32,408.49 L540.69,408.07 L540.89,407.47 L540.34,406.44 L539.53,405.21 L539.27,404.16 L538.76,402.94 L539.03,402.03 L540.00,401.41 L541.06,400.82 L542.03,400.22 L542.64,399.50 L542.48,398.49 L542.94,397.82 L543.23,397.16 L544.13,396.86 L545.71,396.97 L546.87,397.01 L547.29,396.86 L547.53,396.76 L547.50,396.68 L547.89,396.92 L548.35,397.33 L548.76,397.84 L548.36,398.13 L547.67,398.41 L548.04,399.26 L548.58,400.29 L549.13,401.40 L549.61,402.56 L549.92,403.68 L549.27,404.43 L548.31,405.05 L547.80,405.88 L546.80,406.46 L546.29,407.23 L546.33,408.19 L545.85,408.85 L545.54,409.51 L544.53,409.75 L542.93,409.64 L541.78,409.60 L541.09,409.63 L540.94,409.77 L541.47,410.07Z"/>
<path d="M532.14,399.22 L532.07,398.69 L532.10,398.04 L532.36,397.78 L532.78,397.68 L533.41,397.97 L533.90,397.28 L534.48,396.58 L534.98,395.26 L535.56,394.01 L536.38,393.50 L537.26,393.06 L538.38,393.52 L539.52,394.07 L540.45,393.84 L541.45,394.05 L542.20,393.46 L542.92,392.98 L543.72,393.15 L544.57,393.89 L545.34,394.73 L546.01,395.65 L546.44,396.05 L546.73,396.43 L546.63,395.76 L546.75,396.51 L546.71,397.11 L546.51,397.58 L546.00,397.34 L545.45,397.36 L544.92,397.89 L544.42,398.92 L543.85,399.94 L543.29,401.29 L542.53,402.04 L541.59,402.23 L540.54,402.03 L539.39,401.44 L538.35,401.26 L537.43,401.38 L536.71,402.06 L535.92,402.26 L535.17,402.29 L534.37,401.73 L533.46,400.37 L532.83,399.61 L532.42,399.30 L532.21,399.25 L532.15,399.25Z"/>
<path d="M538.12,382.53 L538.77,382.14 L539.62,381.75 L539.94,381.91 L540.08,382.34 L539.92,383.14 L540.77,383.32 L541.80,383.47 L542.93,383.65 L544.67,383.47 L545.73,383.84 L545.90,384.91 L546.37,385.78 L546.11,387.18 L546.34,388.20 L547.08,388.81 L547.69,389.45 L547.97,390.26 L548.34,390.90 L548.14,391.85 L547.47,393.01 L546.80,394.04 L546.54,394.62 L546.83,394.64 L546.86,394.70 L546.33,395.01 L545.83,395.14 L545.77,394.80 L545.53,394.43 L545.19,394.00 L544.67,393.58 L543.83,393.29 L542.00,393.62 L540.72,393.47 L539.60,393.13 L539.50,392.02 L539.30,390.95 L539.40,389.67 L538.86,388.87 L538.61,387.90 L537.99,387.27 L537.24,386.81 L536.77,386.24 L537.05,385.23 L537.90,383.94 L538.56,382.92 L538.50,382.57 L538.58,382.28 L538.15,382.51Z"/>
<path d="M556.18,383.40 L556.73,383.85 L557.58,384.66 L557.43,384.90 L557.21,385.22 L556.55,385.36 L556.91,386.32 L556.89,387.12 L557.89,388.71 L558.19,389.89 L558.22,390.93 L557.83,391.72 L557.06,392.26 L555.64,392.34 L554.64,392.70 L554.23,393.43 L553.71,394.04 L553.25,394.61 L552.58,394.95 L551.44,394.87 L550.22,394.62 L549.08,394.30 L548.32,394.12 L548.36,394.36 L548.38,394.44 L547.76,393.94 L547.50,393.55 L547.42,393.14 L547.88,392.99 L548.07,392.53 L548.21,391.91 L547.49,390.60 L546.97,389.34 L546.64,388.14 L546.42,386.97 L546.69,386.10 L548.04,385.97 L548.80,385.42 L549.92,385.14 L550.49,384.52 L550.70,383.70 L551.32,383.23 L551.96,382.87 L552.95,382.85 L554.10,383.06 L555.61,383.63 L556.12,383.64 L556.37,383.60 L556.15,383.38Z"/>
</g>
<g stroke="#6b9e3c" fill="none" stroke-linecap="round">
<path d="M547.8,395.5 L552.9,398.1" stroke-width="1.5"/>
<path d="M552.9,398.1 L558.9,397.6" stroke-width="0.8"/>
<path d="M552.9,398.1 L556.9,402.6" stroke-width="0.8"/>
<path d="M547.8,395.5 L547.4,401.2" stroke-width="1.5"/>
<path d="M547.4,401.2 L550.6,406.4" stroke-width="0.8"/>
<path d="M547.4,401.2 L543.7,406.0" stroke-width="0.8"/>
<path d="M547.8,395.5 L542.2,396.6" stroke-width="1.5"/>
<path d="M542.2,396.6 L538.0,401.0" stroke-width="0.8"/>
<path d="M542.2,396.6 L536.2,395.6" stroke-width="0.8"/>
<path d="M547.8,395.5 L545.9,390.1" stroke-width="1.5"/>
<path d="M545.9,390.1 L541.8,385.6" stroke-width="0.8"/>
<path d="M545.9,390.1 L547.2,384.2" stroke-width="0.8"/>
<path d="M547.8,395.5 L551.7,391.3" stroke-width="1.5"/>
<path d="M551.7,391.3 L552.7,385.3" stroke-width="0.8"/>
<path d="M551.7,391.3 L557.3,389.0" stroke-width="0.8"/>
</g>
<circle cx="547.8" cy="395.5" r="2.1" fill="#6b9e3c"/>
<g fill="none" stroke="#6b9e3c" stroke-width="0.75">
<path d="M611.37,446.50 L612.16,447.14 L612.25,447.79 L612.68,448.51 L612.55,449.17 L612.49,449.85 L611.74,450.32 L611.05,450.74 L610.68,451.25 L610.73,451.97 L610.94,452.81 L610.75,453.48 L610.56,454.17 L610.03,454.62 L609.45,455.01 L608.83,455.33 L607.71,455.06 L607.58,455.87 L607.64,457.02 L606.94,457.19 L606.63,457.99 L605.94,458.16 L605.02,457.78 L604.45,458.08 L603.71,457.93 L603.18,458.38 L602.65,458.99 L602.05,459.43 L601.33,459.14 L600.67,459.37 L600.00,459.11 L599.35,458.92 L598.81,457.83 L598.08,458.65 L597.32,459.11 L596.48,459.65 L595.78,459.48 L595.17,459.08 L594.86,458.05 L594.67,456.97 L594.54,455.95 L593.48,456.54 L592.62,456.66 L591.45,457.06 L590.92,456.58 L590.50,456.00 L590.39,455.15 L590.52,454.18 L590.69,453.26 L590.10,452.93 L588.82,452.95 L588.21,452.51 L587.95,451.86 L587.78,451.19 L587.82,450.46 L588.55,449.57 L588.34,448.98 L588.11,448.38 L587.77,447.79 L587.33,447.16 L586.89,446.50 L587.37,445.84 L587.31,445.17 L587.61,444.54 L589.07,444.18 L588.42,443.40 L587.81,442.54 L587.42,441.67 L587.48,440.92 L588.04,440.40 L588.80,440.03 L590.12,440.08 L590.73,439.77 L590.65,438.93 L590.50,437.94 L590.98,437.48 L591.27,436.81 L592.10,436.74 L592.76,436.54 L593.44,436.41 L594.11,436.29 L594.41,435.52 L594.81,434.85 L595.42,434.56 L595.97,434.09 L596.66,434.03 L597.38,434.17 L598.13,434.72 L598.72,434.34 L599.37,434.47 L600.00,433.65 L600.68,433.52 L601.30,434.15 L601.98,433.99 L602.65,434.04 L603.26,434.35 L603.59,435.46 L604.31,435.28 L605.06,435.14 L606.02,434.69 L606.43,435.37 L607.08,435.59 L607.28,436.48 L607.68,437.02 L607.95,437.67 L608.42,438.08 L609.58,437.87 L610.12,438.31 L610.84,438.62 L611.03,439.34 L610.81,440.26 L611.09,440.85 L610.54,441.81 L611.04,442.26 L611.73,442.69 L612.58,443.13 L612.83,443.77 L612.73,444.48 L612.36,445.20 L612.04,445.87 L611.45,446.50Z"/>
<path d="M609.88,449.45 L609.73,449.83 L609.35,450.76 L609.18,450.65 L608.97,450.44 L608.81,449.79 L608.36,449.91 L607.74,450.50 L606.88,451.74 L606.16,452.34 L605.50,452.59 L604.95,452.40 L604.56,451.60 L604.21,450.64 L603.76,450.08 L603.10,450.32 L602.61,450.11 L601.97,450.56 L601.70,449.86 L601.51,449.07 L601.43,448.11 L601.50,446.87 L601.44,446.36 L601.24,446.67 L601.09,447.04 L601.47,445.84 L601.69,445.48 L601.93,445.31 L602.12,445.61 L602.32,446.13 L602.78,445.96 L603.29,445.77 L604.17,444.48 L604.91,443.81 L605.65,443.25 L606.17,443.54 L606.53,444.46 L606.88,445.43 L607.46,445.51 L607.87,446.16 L608.51,445.85 L609.02,445.85 L609.40,446.18 L609.65,446.72 L609.73,447.70 L609.60,449.16 L609.69,449.54 L609.74,449.78 L609.94,449.22Z"/>
<path d="M603.00,456.81 L601.82,457.09 L601.57,457.03 L601.68,456.79 L601.53,456.55 L601.68,456.15 L601.79,455.69 L601.24,455.36 L600.13,455.12 L599.14,454.81 L598.36,454.42 L598.45,453.76 L598.76,453.02 L599.25,452.25 L599.31,451.60 L598.94,451.08 L598.55,450.61 L598.33,450.14 L598.30,449.66 L598.73,449.11 L599.66,448.50 L600.52,447.98 L601.13,447.60 L600.92,447.54 L600.05,447.73 L600.88,447.55 L601.58,447.48 L601.70,447.65 L601.59,447.97 L601.02,448.49 L601.25,448.85 L601.97,449.14 L603.14,449.36 L604.22,449.64 L605.15,450.00 L605.14,450.64 L604.75,451.39 L603.76,452.30 L603.53,453.00 L604.10,453.46 L604.68,453.88 L604.86,454.37 L604.95,454.83 L604.12,455.48 L603.50,456.01 L602.97,456.44 L602.46,456.79 L602.57,456.88 L603.11,456.78Z"/>
<path d="M591.59,452.93 L591.08,452.20 L590.80,451.63 L591.04,451.62 L591.48,451.75 L591.89,451.73 L592.27,451.55 L592.22,450.73 L592.21,449.88 L591.81,448.45 L592.17,447.97 L592.47,447.36 L593.41,447.59 L594.44,447.92 L595.23,447.97 L595.63,447.53 L595.72,446.75 L595.92,446.17 L596.56,446.25 L597.28,446.52 L597.98,446.87 L598.74,447.42 L599.29,447.80 L599.41,447.76 L599.01,447.18 L599.32,447.65 L599.62,448.24 L599.52,448.43 L599.28,448.56 L598.71,448.39 L598.54,448.82 L598.40,449.40 L598.51,450.38 L598.64,451.46 L598.74,452.55 L598.10,452.70 L597.12,452.42 L596.11,452.11 L595.55,452.38 L595.17,452.84 L594.85,453.32 L594.56,453.79 L594.29,454.18 L593.68,454.06 L592.56,453.16 L591.71,452.49 L591.34,452.34 L591.31,452.50 L591.67,453.03Z"/>
<path d="M589.63,439.74 L590.03,439.22 L590.69,438.48 L590.70,438.89 L590.99,439.03 L591.02,439.73 L591.53,439.84 L592.55,439.27 L593.49,438.94 L594.81,438.12 L595.54,438.26 L596.00,438.87 L596.31,439.73 L596.60,440.62 L597.04,441.26 L597.69,441.52 L598.12,442.06 L598.83,442.10 L599.13,442.65 L599.39,443.12 L598.88,444.65 L598.57,445.72 L598.45,446.33 L598.68,446.24 L599.12,445.64 L598.37,446.71 L598.02,447.00 L597.70,447.05 L597.60,446.62 L597.57,445.92 L597.11,445.74 L596.02,446.41 L594.99,446.88 L594.12,447.01 L593.03,447.41 L592.57,446.81 L592.27,445.93 L592.05,444.93 L591.75,444.08 L591.24,443.59 L590.46,443.60 L589.81,443.47 L589.26,443.32 L589.52,442.04 L589.48,441.36 L590.01,439.95 L590.08,439.41 L589.81,439.57 L589.53,439.91Z"/>
<path d="M603.80,436.79 L604.85,437.25 L604.86,437.38 L604.91,437.61 L604.84,437.87 L604.00,437.89 L604.19,438.40 L604.88,439.16 L605.62,440.00 L605.92,440.70 L606.19,441.43 L605.90,441.95 L605.62,442.49 L604.38,442.64 L604.03,443.14 L603.90,443.70 L603.67,444.19 L603.67,444.73 L603.75,445.25 L602.79,445.29 L601.52,445.15 L600.76,445.13 L599.95,445.02 L599.91,445.13 L600.17,445.28 L599.56,444.99 L599.05,444.66 L599.25,444.53 L599.45,444.32 L600.32,444.31 L600.22,443.84 L599.63,443.11 L598.59,442.16 L597.89,441.30 L597.93,440.70 L598.31,440.21 L598.97,439.83 L599.80,439.51 L600.18,439.03 L600.81,438.66 L600.39,437.91 L600.39,437.37 L600.64,436.98 L601.44,436.87 L602.61,436.98 L603.77,437.16 L604.36,437.18 L604.36,437.05 L603.71,436.75Z"/>
</g>
<g stroke="#6b9e3c" fill="none" stroke-linecap="round">
<path d="M600.0,446.5 L603.9,446.4" stroke-width="1.5"/>
<path d="M603.9,446.4 L607.3,444.0" stroke-width="0.8"/>
<path d="M603.9,446.4 L607.4,448.6" stroke-width="0.8"/>
<path d="M600.0,446.5 L601.1,450.2" stroke-width="1.5"/>
<path d="M601.1,450.2 L604.4,452.8" stroke-width="0.8"/>
<path d="M601.1,450.2 L600.8,454.4" stroke-width="0.8"/>
<path d="M600.0,446.5 L596.6,448.4" stroke-width="1.5"/>
<path d="M596.6,448.4 L594.6,452.1" stroke-width="0.8"/>
<path d="M596.6,448.4 L592.5,447.9" stroke-width="0.8"/>
<path d="M600.0,446.5 L597.4,443.6" stroke-width="1.5"/>
<path d="M597.4,443.6 L593.7,441.6" stroke-width="0.8"/>
<path d="M597.4,443.6 L596.2,439.6" stroke-width="0.8"/>
<path d="M600.0,446.5 L601.1,442.8" stroke-width="1.5"/>
<path d="M601.1,442.8 L599.8,438.8" stroke-width="0.8"/>
<path d="M601.1,442.8 L604.1,439.8" stroke-width="0.8"/>
</g>
<circle cx="600" cy="446.5" r="1.4" fill="#6b9e3c"/>
<g fill="none" stroke="#6b9e3c" stroke-width="0.75">
<path d="M678.65,461.00 L679.40,461.95 L679.94,462.96 L680.17,463.99 L680.63,465.11 L680.04,466.02 L679.18,466.81 L678.31,467.53 L677.85,468.37 L677.65,469.33 L677.45,470.33 L677.56,471.56 L676.99,472.40 L676.46,473.28 L675.09,473.42 L674.26,473.96 L673.45,474.50 L673.02,475.47 L672.50,476.42 L671.49,476.68 L670.78,477.43 L669.82,477.71 L668.85,477.95 L668.01,478.48 L666.82,477.98 L666.13,479.02 L665.20,479.33 L664.34,480.16 L663.31,480.12 L662.29,479.95 L661.30,480.02 L660.32,479.64 L659.49,478.26 L658.42,479.16 L657.35,479.57 L656.36,479.44 L655.33,479.38 L654.48,478.77 L653.70,478.07 L653.06,477.17 L652.47,476.29 L651.27,476.44 L650.30,476.13 L649.36,475.75 L648.36,475.37 L647.55,474.75 L647.41,473.51 L647.18,472.44 L647.29,471.18 L645.79,471.07 L644.87,470.49 L644.31,469.66 L643.72,468.83 L643.28,467.92 L643.25,466.86 L643.54,465.76 L644.51,464.57 L643.49,463.82 L642.30,463.00 L641.95,462.01 L641.85,461.00 L642.02,459.99 L642.12,458.98 L643.38,458.16 L644.05,457.33 L643.71,456.29 L643.37,455.17 L643.03,453.99 L643.21,452.94 L644.18,452.27 L645.11,451.65 L645.81,450.94 L646.88,450.53 L647.26,449.63 L647.17,448.28 L647.94,447.64 L648.42,446.70 L649.42,446.33 L650.13,445.63 L651.29,445.58 L652.69,446.09 L653.16,445.02 L653.57,443.64 L654.30,442.76 L655.16,442.09 L656.34,442.51 L657.34,442.36 L658.46,443.04 L659.43,443.20 L660.35,442.90 L661.30,442.36 L662.30,441.95 L663.33,441.65 L664.24,442.44 L665.20,442.63 L666.11,443.04 L666.86,443.88 L667.79,444.09 L668.87,443.99 L670.18,443.57 L671.16,443.93 L671.78,444.87 L672.21,445.98 L673.02,446.53 L673.18,447.81 L674.48,447.82 L675.34,448.35 L676.33,448.83 L676.66,449.84 L677.50,450.48 L677.43,451.69 L677.60,452.69 L677.54,453.77 L678.59,454.36 L679.10,455.22 L679.81,456.04 L680.32,456.96 L680.44,457.97 L680.05,459.03 L679.30,460.06 L678.68,461.00Z"/>
<path d="M679.58,459.43 L679.60,460.42 L679.39,460.56 L679.08,461.17 L678.53,460.58 L677.92,460.77 L677.20,461.06 L676.44,461.95 L675.59,462.96 L674.69,464.18 L673.69,464.97 L672.58,464.92 L671.43,464.59 L670.24,463.86 L669.10,463.48 L668.02,463.25 L667.06,463.90 L666.14,464.05 L665.26,463.72 L664.49,463.33 L663.77,462.28 L663.17,461.06 L662.74,460.30 L662.53,460.47 L662.47,460.66 L662.51,460.25 L662.67,459.49 L663.03,459.56 L663.53,459.51 L664.16,459.57 L664.90,459.54 L665.64,458.33 L666.50,457.46 L667.37,455.92 L668.38,455.21 L669.49,455.32 L670.68,456.06 L671.83,456.40 L672.98,456.85 L674.01,456.49 L675.04,456.68 L675.92,456.02 L676.77,456.12 L677.59,456.98 L678.30,457.99 L678.92,459.38 L679.30,459.51 L679.54,459.81 L679.56,459.12Z"/>
<path d="M665.72,475.85 L665.30,475.92 L664.46,476.00 L663.92,475.85 L664.20,475.33 L663.61,474.97 L663.38,474.40 L661.95,474.11 L660.87,473.64 L659.26,473.27 L658.08,472.71 L658.19,471.71 L658.39,470.67 L658.67,469.61 L659.03,468.53 L659.09,467.58 L658.70,466.83 L658.49,466.08 L658.24,465.42 L659.11,464.50 L660.05,463.66 L661.49,462.77 L661.77,462.37 L662.22,462.03 L661.64,462.15 L662.65,461.89 L663.18,461.92 L663.78,462.05 L663.66,462.52 L663.84,463.01 L664.60,463.41 L665.27,463.94 L667.25,464.13 L668.44,464.63 L669.25,465.30 L669.78,466.10 L669.24,467.25 L669.23,468.22 L668.75,469.34 L668.72,470.28 L669.27,470.98 L669.30,471.79 L668.96,472.63 L668.56,473.41 L667.10,474.41 L666.51,475.03 L665.56,475.65 L665.71,475.79 L666.25,475.69Z"/>
<path d="M649.18,473.54 L648.59,472.85 L648.26,472.23 L648.20,471.69 L648.72,471.54 L649.17,471.16 L649.28,470.28 L649.58,469.44 L649.32,467.94 L649.02,466.30 L649.55,465.40 L650.32,464.69 L651.31,464.19 L652.67,464.05 L653.65,463.56 L654.50,462.99 L654.91,462.05 L655.47,461.36 L656.42,461.18 L657.33,461.10 L658.65,461.58 L659.91,462.19 L660.29,462.08 L660.78,462.28 L660.60,462.00 L660.86,462.36 L661.37,463.15 L661.33,463.60 L660.85,463.78 L660.20,463.97 L659.87,464.63 L659.79,465.68 L660.28,467.41 L660.36,468.84 L660.01,469.91 L659.38,470.76 L658.15,471.03 L657.10,471.48 L655.93,471.78 L654.93,472.20 L654.65,473.27 L653.72,473.59 L653.14,474.13 L651.99,473.98 L650.67,473.50 L649.47,472.96 L649.06,473.03 L648.54,472.81 L648.99,473.35Z"/>
<path d="M649.06,451.64 L649.61,451.02 L650.15,450.61 L650.53,450.60 L650.52,451.30 L650.91,451.64 L651.56,451.79 L652.52,451.68 L654.15,450.82 L655.43,450.50 L656.48,450.57 L656.93,451.49 L657.64,452.09 L657.91,453.27 L658.24,454.34 L658.98,454.82 L659.65,455.32 L660.25,455.80 L660.58,456.51 L660.63,457.47 L660.27,458.79 L660.04,459.78 L660.04,460.28 L660.13,460.46 L660.47,460.11 L659.69,461.04 L659.35,461.18 L658.93,461.24 L658.75,460.80 L658.29,460.56 L657.72,460.29 L656.77,460.39 L655.31,461.03 L653.87,461.56 L653.07,461.16 L652.12,460.90 L652.03,459.48 L651.64,458.47 L651.22,457.51 L650.39,457.15 L649.54,456.89 L648.93,456.41 L648.70,455.56 L648.51,454.81 L648.99,453.31 L649.36,452.15 L649.28,451.76 L649.26,451.48 L648.96,451.78Z"/>
<path d="M665.15,442.73 L665.94,442.97 L666.60,443.32 L666.45,443.67 L666.39,444.17 L666.12,444.77 L666.16,445.54 L666.80,446.54 L668.05,447.76 L668.65,448.93 L669.58,450.22 L668.90,451.22 L668.07,452.22 L667.18,453.21 L666.94,454.30 L666.26,455.27 L666.06,456.27 L665.86,457.20 L665.35,457.98 L664.73,458.62 L663.38,459.00 L662.19,459.28 L661.46,459.50 L660.94,459.63 L661.59,459.83 L660.74,459.59 L659.91,459.20 L659.81,458.80 L659.99,458.32 L660.66,457.81 L660.00,456.91 L659.27,455.89 L658.25,454.71 L657.81,453.58 L657.32,452.38 L657.60,451.30 L658.41,450.29 L658.86,449.22 L659.61,448.23 L660.06,447.21 L660.02,446.16 L660.27,445.24 L660.99,444.51 L662.10,443.96 L663.42,443.58 L664.25,443.23 L665.34,443.07 L665.40,442.86 L664.99,442.70Z"/>
</g>
<g stroke="#6b9e3c" fill="none" stroke-linecap="round">
<path d="M661.3,461.0 L666.8,459.0" stroke-width="1.5"/>
<path d="M666.8,459.0 L670.6,454.1" stroke-width="0.8"/>
<path d="M666.8,459.0 L673.0,459.6" stroke-width="0.8"/>
<path d="M661.3,461.0 L663.8,466.3" stroke-width="1.5"/>
<path d="M663.8,466.3 L669.1,469.7" stroke-width="0.8"/>
<path d="M663.8,466.3 L663.9,472.5" stroke-width="0.8"/>
<path d="M661.3,461.0 L656.8,464.7" stroke-width="1.5"/>
<path d="M656.8,464.7 L654.5,470.5" stroke-width="0.8"/>
<path d="M656.8,464.7 L650.6,465.2" stroke-width="0.8"/>
<path d="M661.3,461.0 L656.1,458.4" stroke-width="1.5"/>
<path d="M656.1,458.4 L649.9,459.5" stroke-width="0.8"/>
<path d="M656.1,458.4 L652.4,453.4" stroke-width="0.8"/>
<path d="M661.3,461.0 L661.9,455.2" stroke-width="1.5"/>
<path d="M661.9,455.2 L659.9,449.3" stroke-width="0.8"/>
<path d="M661.9,455.2 L665.1,449.9" stroke-width="0.8"/>
</g>
<circle cx="661.3" cy="461" r="2.1" fill="#6b9e3c"/>
<path d="M616.23,409.50 L616.03,410.20 L615.63,410.87 L616.25,411.65 L615.30,412.21 L615.95,413.05 L615.08,413.56 L614.71,414.15 L614.69,414.87 L615.00,415.75 L614.92,416.50 L613.64,416.63 L613.77,417.50 L613.39,418.09 L613.26,418.86 L612.30,419.00 L612.12,419.75 L611.52,420.16 L611.40,421.03 L610.45,421.04 L610.39,422.06 L609.39,421.91 L608.78,422.23 L608.46,423.05 L607.74,423.20 L606.93,423.13 L606.53,423.94 L605.66,423.63 L605.25,424.59 L604.54,424.69 L603.87,424.95 L603.14,424.92 L602.40,424.72 L601.72,424.84 L601.02,424.88 L600.32,425.43 L599.65,424.52 L598.88,425.34 L598.31,424.32 L597.60,424.40 L596.92,424.31 L596.06,424.81 L595.51,424.18 L594.90,423.81 L594.03,424.05 L593.70,423.10 L592.97,423.00 L592.33,422.71 L591.60,422.53 L591.02,422.12 L590.54,421.58 L590.22,420.88 L589.74,420.39 L589.39,419.76 L588.36,419.74 L588.07,419.06 L587.58,418.54 L587.72,417.60 L587.11,417.17 L586.45,416.72 L586.33,415.99 L586.51,415.16 L585.92,414.64 L585.26,414.11 L585.76,413.24 L585.65,412.56 L585.41,411.91 L584.88,411.27 L584.66,410.58 L585.38,409.84 L585.38,409.16 L585.31,408.47 L585.29,407.77 L585.17,407.05 L585.68,406.44 L585.66,405.73 L585.99,405.11 L585.39,404.17 L585.90,403.60 L586.81,403.23 L586.26,402.18 L587.43,402.02 L587.52,401.27 L587.36,400.31 L587.95,399.85 L588.46,399.34 L589.17,399.03 L589.84,398.72 L590.01,397.88 L590.92,397.87 L591.39,397.36 L591.83,396.80 L592.62,396.75 L593.01,396.06 L593.43,395.35 L594.12,395.14 L594.85,395.06 L595.46,394.69 L596.19,394.65 L596.95,394.82 L597.52,394.17 L598.25,394.27 L598.90,393.82 L599.60,393.58 L600.33,394.08 L601.03,393.93 L601.75,393.78 L602.41,394.21 L603.06,394.52 L603.85,394.12 L604.59,394.12 L605.25,394.43 L605.90,394.73 L606.62,394.84 L607.20,395.30 L607.81,395.66 L608.33,396.18 L608.83,396.68 L609.61,396.78 L609.81,397.67 L610.57,397.83 L611.36,398.01 L611.81,398.56 L612.23,399.15 L612.36,399.95 L612.93,400.38 L613.36,400.93 L613.89,401.43 L614.04,402.15 L614.62,402.65 L615.17,403.18 L614.67,404.14 L615.39,404.62 L615.73,405.27 L615.49,406.05 L615.74,406.71 L616.37,407.33 L615.43,408.15 L616.03,408.80 L615.63,409.50Z" fill="none" stroke="#6b9e3c" stroke-width="1.05"/>
<g stroke="#6b9e3c" stroke-width="1.1" stroke-linecap="round" opacity="0.9">
<path d="M603.7,423.4 L602.4,424.9"/>
<path d="M610.6,415.8 L612.8,419.0"/>
<path d="M610.3,418.2 L611.0,420.9"/>
<path d="M605.8,421.4 L605.4,424.2"/>
<path d="M609.0,420.6 L608.6,422.7"/>
<path d="M611.3,416.3 L612.7,419.1"/>
<path d="M597.2,421.3 L594.8,423.9"/>
<path d="M606.8,420.6 L606.8,423.7"/>
<path d="M603.8,421.0 L603.3,424.7"/>
<path d="M595.8,421.2 L593.3,423.2"/>
<path d="M608.9,400.4 L612.0,399.2"/>
<path d="M611.9,411.8 L615.3,414.1"/>
<path d="M612.9,412.7 L615.0,414.9"/>
<path d="M606.3,420.7 L606.2,423.9"/>
<path d="M612.5,407.0 L615.9,407.9"/>
<path d="M605.3,422.9 L604.3,424.5"/>
<path d="M610.7,416.2 L612.5,419.3"/>
<path d="M602.6,422.0 L601.5,425.0"/>
<path d="M611.7,405.2 L615.5,405.5"/>
<path d="M603.8,423.0 L602.7,424.8"/>
<path d="M608.5,419.7 L608.8,422.6"/>
<path d="M603.3,415.0 l2.9,1.8"/>
<path d="M604.0,419.2 l2.7,2.0"/>
<path d="M607.1,414.8 l1.4,2.7"/>
<path d="M608.1,416.8 l1.7,1.9"/>
<path d="M606.8,413.8 l1.5,1.2"/>
<path d="M601.9,416.0 l1.6,1.7"/>
<path d="M604.8,415.8 l2.3,2.4"/>
</g>
<path d="M585.95,466.60 L586.56,467.32 L586.42,468.04 L585.47,468.63 L586.20,469.45 L586.14,470.18 L585.83,470.84 L584.95,471.30 L585.43,472.22 L584.96,472.79 L584.05,473.14 L583.74,473.74 L584.28,474.86 L583.62,475.29 L582.85,475.60 L582.31,476.04 L581.90,476.59 L581.50,477.16 L581.42,478.08 L580.58,478.19 L579.91,478.46 L579.84,479.54 L579.17,479.84 L578.22,479.62 L577.98,480.66 L577.21,480.69 L576.63,481.15 L575.92,481.29 L575.32,481.74 L574.59,481.83 L573.91,482.04 L573.09,481.48 L572.47,482.11 L571.75,482.00 L571.06,482.26 L570.35,481.93 L569.62,482.38 L568.94,481.96 L568.30,481.55 L567.63,481.39 L566.98,481.14 L566.21,481.32 L565.71,480.65 L564.90,480.83 L564.41,480.23 L563.62,480.27 L563.00,479.94 L562.38,479.61 L561.59,479.51 L561.59,478.34 L560.47,478.61 L560.21,477.83 L559.64,477.41 L559.07,476.97 L558.46,476.56 L558.43,475.68 L557.99,475.14 L557.11,474.86 L557.60,473.77 L556.73,473.44 L556.44,472.80 L556.79,471.90 L555.96,471.46 L555.68,470.81 L555.23,470.18 L555.74,469.36 L554.92,468.77 L555.35,468.00 L555.33,467.30 L554.86,466.60 L555.83,465.92 L555.12,465.18 L555.31,464.48 L555.73,463.84 L555.31,463.03 L556.01,462.48 L556.10,461.78 L556.28,461.10 L556.30,460.35 L557.15,459.97 L557.25,459.24 L557.61,458.64 L557.87,457.97 L558.04,457.22 L558.93,457.03 L558.94,456.11 L559.76,455.91 L560.19,455.34 L560.87,455.07 L561.25,454.43 L561.52,453.59 L562.31,453.48 L562.84,452.99 L563.70,453.09 L564.33,452.80 L564.97,452.54 L565.51,452.00 L566.17,451.73 L566.81,451.38 L567.67,452.02 L568.22,451.15 L568.90,450.88 L569.65,451.19 L570.36,451.70 L571.05,451.42 L571.71,451.78 L572.41,451.64 L573.22,450.94 L573.86,451.41 L574.56,451.51 L575.28,451.57 L576.01,451.66 L576.56,452.23 L577.21,452.50 L577.85,452.80 L578.51,453.08 L579.06,453.54 L579.70,453.86 L579.95,454.69 L580.81,454.74 L581.18,455.38 L581.92,455.63 L581.86,456.64 L582.37,457.10 L582.67,457.74 L583.73,457.84 L584.25,458.36 L584.36,459.12 L584.40,459.89 L585.15,460.32 L585.38,461.00 L585.39,461.75 L585.27,462.52 L585.49,463.17 L585.76,463.83 L585.76,464.53 L585.96,465.21 L586.24,465.89 L586.58,466.60Z" fill="none" stroke="#6b9e3c" stroke-width="1.05"/>
<g stroke="#6b9e3c" stroke-width="1.1" stroke-linecap="round" opacity="0.9">
<path d="M579.5,456.9 L582.1,456.3"/>
<path d="M578.3,457.4 L581.6,455.7"/>
<path d="M572.5,479.6 L571.3,482.0"/>
<path d="M568.3,479.2 L566.4,481.4"/>
<path d="M578.0,456.3 L580.8,455.0"/>
<path d="M580.8,476.5 L580.6,478.4"/>
<path d="M566.0,478.6 L563.7,480.3"/>
<path d="M582.2,469.4 L585.2,471.7"/>
<path d="M577.9,476.4 L578.6,479.8"/>
<path d="M580.6,460.6 L584.6,460.0"/>
<path d="M578.1,455.4 L580.4,454.7"/>
<path d="M582.2,458.2 L583.9,458.7"/>
<path d="M581.1,457.2 L583.1,457.5"/>
<path d="M580.2,459.9 L584.1,459.0"/>
<path d="M575.6,477.8 L575.4,481.3"/>
<path d="M575.1,477.9 L574.8,481.4"/>
<path d="M579.7,456.3 L582.0,456.1"/>
<path d="M576.5,479.3 L575.7,481.2"/>
<path d="M575.1,477.5 L575.0,481.4"/>
<path d="M579.3,477.1 L579.2,479.4"/>
<path d="M583.8,471.9 L584.3,473.7"/>
<path d="M580.0,473.0 l2.5,1.2"/>
<path d="M579.6,468.6 l2.7,1.3"/>
<path d="M578.1,472.8 l1.5,2.7"/>
<path d="M573.5,470.8 l1.9,2.2"/>
<path d="M576.5,473.9 l1.5,2.6"/>
<path d="M577.2,473.0 l2.3,2.0"/>
<path d="M577.6,473.9 l2.9,2.6"/>
</g>
<path d="M642.97,500.90 L642.65,501.59 L642.33,502.24 L643.20,503.10 L642.74,503.73 L642.66,504.46 L641.90,504.93 L641.88,505.69 L641.89,506.52 L641.36,507.05 L640.73,507.48 L640.03,507.80 L639.64,508.39 L639.45,509.24 L638.55,509.24 L638.16,509.92 L637.50,510.21 L637.00,510.82 L636.30,511.01 L635.44,510.70 L634.71,510.58 L634.10,511.00 L633.44,511.26 L632.75,511.49 L632.04,511.74 L631.31,511.77 L630.74,510.76 L629.88,511.47 L629.19,511.26 L628.48,511.08 L627.95,510.50 L627.47,509.89 L626.54,510.08 L625.97,509.63 L625.49,509.07 L624.78,508.77 L624.74,507.83 L624.52,507.12 L623.69,506.88 L623.08,506.42 L623.32,505.49 L622.48,505.11 L622.03,504.50 L622.56,503.60 L622.00,503.01 L621.80,502.33 L621.96,501.60 L622.22,500.90 L622.19,500.22 L621.72,499.46 L621.80,498.74 L622.32,498.14 L622.91,497.60 L622.42,496.67 L622.76,496.03 L623.62,495.70 L623.67,494.91 L623.82,494.12 L624.30,493.57 L625.08,493.34 L625.64,492.90 L626.11,492.37 L626.93,492.34 L627.52,491.99 L628.13,491.69 L628.55,490.90 L629.33,491.02 L629.95,490.62 L630.67,490.65 L631.35,490.43 L632.06,490.79 L632.73,490.91 L633.51,489.91 L634.12,490.68 L634.73,491.11 L635.55,490.73 L636.29,490.81 L636.66,491.72 L637.50,491.60 L637.96,492.19 L638.64,492.43 L638.84,493.28 L639.34,493.72 L640.59,493.49 L640.96,494.14 L641.04,494.97 L641.50,495.51 L641.54,496.28 L642.35,496.68 L642.24,497.48 L643.00,498.00 L642.98,498.75 L643.15,499.45 L643.39,500.16 L642.63,500.90Z" fill="none" stroke="#6b9e3c" stroke-width="1.05"/>
<g stroke="#6b9e3c" stroke-width="1.1" stroke-linecap="round" opacity="0.9">
<path d="M637.6,494.5 L639.8,493.5"/>
<path d="M639.6,497.3 L642.2,497.2"/>
<path d="M638.3,494.2 L640.1,493.8"/>
<path d="M632.0,509.6 L630.9,511.3"/>
<path d="M629.8,510.1 L628.6,510.7"/>
<path d="M638.6,494.4 L640.4,494.1"/>
<path d="M640.4,502.4 L642.5,503.9"/>
<path d="M629.9,508.9 L628.2,510.5"/>
<path d="M639.4,506.7 L639.8,508.4"/>
<path d="M629.7,509.6 L628.3,510.6"/>
<path d="M641.0,502.5 L642.5,503.8"/>
<path d="M640.8,496.1 L642.0,496.6"/>
<path d="M629.1,508.5 L627.3,510.1"/>
<path d="M637.7,494.4 L639.8,493.5"/>
<path d="M637.8,506.0 l2.8,2.7"/>
<path d="M639.0,502.8 l2.5,2.4"/>
<path d="M631.7,504.2 l1.5,2.6"/>
<path d="M631.6,507.2 l1.7,2.3"/>
<path d="M633.0,504.5 l1.8,1.7"/>
</g>
<circle cx="530.8" cy="447.3" r="5.2" fill="#6b9c36" stroke="#5f902c" stroke-width="0.6"/>
<path d="M532.4,448.9 l-1.0,-0.8 M532.7,449.6 l-1.5,0.7 M531.0,447.9 l1.3,-0.8 M534.2,445.8 l1.2,-1.1 M530.0,447.6 l1.3,1.0 M529.3,445.7 l-0.5,1.0 M528.0,447.7 l-1.1,-0.8" stroke="#a9c888" stroke-width="0.7"/>
<circle cx="546.4" cy="445.5" r="5.2" fill="#6b9c36" stroke="#5f902c" stroke-width="0.6"/>
<path d="M549.3,446.6 l0.2,-1.1 M547.4,444.4 l-0.3,-1.0 M545.9,449.0 l-0.5,-1.0 M544.7,445.6 l1.2,-1.2 M547.1,445.4 l1.2,0.5 M546.9,447.7 l-0.6,-0.7 M546.9,447.2 l1.5,1.5" stroke="#a9c888" stroke-width="0.7"/>
<circle cx="560.7" cy="440" r="5.2" fill="#6b9c36" stroke="#5f902c" stroke-width="0.6"/>
<path d="M561.5,439.6 l-0.6,1.2 M563.7,441.1 l-0.6,1.4 M564.1,440.3 l-0.5,-1.1 M564.2,440.0 l0.1,-0.9 M557.2,441.5 l-0.8,0.2 M561.4,440.9 l0.8,0.6 M561.0,440.7 l-1.2,0.3" stroke="#a9c888" stroke-width="0.7"/>
<circle cx="629.3" cy="428.8" r="5.2" fill="#6b9c36" stroke="#5f902c" stroke-width="0.6"/>
<path d="M627.8,428.8 l-0.9,0.3 M628.4,425.5 l0.2,-0.9 M632.2,430.1 l-0.3,0.7 M632.6,430.0 l-0.5,1.0 M630.8,427.1 l-1.5,1.2 M625.6,429.3 l-0.7,-0.9 M630.2,427.2 l-1.0,-0.4" stroke="#a9c888" stroke-width="0.7"/>
<circle cx="625" cy="443.2" r="5.2" fill="#6b9c36" stroke="#5f902c" stroke-width="0.6"/>
<path d="M624.6,442.9 l0.1,-0.2 M624.1,443.1 l0.6,0.9 M626.1,441.9 l0.6,-0.4 M625.0,442.5 l1.1,1.4 M622.6,443.3 l0.1,0.1 M629.0,443.7 l-0.8,-1.0 M626.1,444.1 l1.0,-1.4" stroke="#a9c888" stroke-width="0.7"/>
<circle cx="621.8" cy="459.5" r="5.2" fill="#6b9c36" stroke="#5f902c" stroke-width="0.6"/>
<path d="M624.3,461.2 l-0.9,-1.4 M619.7,458.0 l0.1,0.6 M624.7,461.7 l0.7,-1.4 M623.5,461.1 l0.0,-0.7 M623.2,460.9 l-1.1,0.3 M622.5,458.7 l0.2,0.7 M623.6,462.5 l1.3,-0.3" stroke="#a9c888" stroke-width="0.7"/>
<circle cx="625" cy="476.3" r="5.2" fill="#6b9c36" stroke="#5f902c" stroke-width="0.6"/>
<path d="M621.9,478.0 l0.1,-0.3 M628.1,475.1 l-0.5,-0.8 M623.9,478.1 l1.4,0.9 M628.0,474.5 l1.0,-1.3 M621.0,475.9 l1.3,-0.8 M622.5,477.6 l-0.4,0.1 M626.9,477.2 l0.0,-1.4" stroke="#a9c888" stroke-width="0.7"/>
<circle cx="570.4" cy="495.7" r="5.2" fill="#6b9c36" stroke="#5f902c" stroke-width="0.6"/>
<path d="M573.0,498.8 l0.8,1.3 M568.1,493.1 l1.2,1.2 M573.2,496.3 l-0.7,0.5 M570.0,498.2 l1.3,0.4 M570.4,498.1 l-0.2,1.4 M570.0,497.3 l0.4,-1.1 M567.1,493.5 l0.0,-0.7" stroke="#a9c888" stroke-width="0.7"/>
<circle cx="559" cy="507.5" r="5.2" fill="#6b9c36" stroke="#5f902c" stroke-width="0.6"/>
<path d="M556.6,508.0 l-1.1,-1.1 M560.1,508.7 l-0.3,-0.6 M559.0,508.3 l0.1,1.0 M557.0,505.9 l0.5,-0.9 M558.5,505.4 l0.1,0.3 M557.4,507.8 l-0.8,-0.8 M557.1,507.4 l0.3,-1.5" stroke="#a9c888" stroke-width="0.7"/>
<circle cx="551.8" cy="520" r="5.2" fill="#6b9c36" stroke="#5f902c" stroke-width="0.6"/>
<path d="M549.6,522.9 l-0.8,0.2 M550.3,520.1 l1.5,-0.6 M551.9,518.9 l-1.3,1.1 M551.1,520.3 l-0.3,-0.2 M551.7,519.1 l-0.8,1.4 M551.7,518.9 l-0.5,-0.4 M550.6,517.5 l1.0,1.0" stroke="#a9c888" stroke-width="0.7"/>
<circle cx="523.6" cy="493.5" r="5.2" fill="none" stroke="#f03c3c" stroke-width="1"/>
<path d="M503,493.5 H544 M523.6,473 V514" stroke="#f03c3c" stroke-width="1"/>
<path d="M523.9,155 V732" stroke="#f6ecd0" stroke-width="1.15" opacity="0.6"/><path d="M523.9,155 V732" stroke="#f4d478" stroke-width="1.15" stroke-dasharray="4.5 1.5"/>
<path d="M95,621.8 H1138" stroke="#f6ecd0" stroke-width="1.15" opacity="0.6"/><path d="M95,621.8 H1138" stroke="#f4d478" stroke-width="1.15" stroke-dasharray="4.5 1.5"/>
<circle cx="523.5" cy="621.2" r="39" fill="url(#magr)"/>
<path d="M507.5,621.2 H539 M523.3,605.4 V636.6" stroke="#9a9a9a" stroke-width="1.8"/>
<circle cx="523.5" cy="621.2" r="4.8" fill="none" stroke="#f2c55a" stroke-width="0.8" stroke-dasharray="2 1.5"/>
<text x="531" y="639.8" font-family="Liberation Sans" font-size="13.5" fill="#f2b818">Grille</text>
</g>
<rect x="1143" y="279" width="8" height="329" rx="4" fill="#000"/>
</svg>
<svg class="a" style="left:72px;top:732px" width="1083" height="68" viewBox="72 732 1083 68">
<rect x="72" y="732" width="1083" height="17" fill="#f6f6f6"/>
<rect x="72" y="732" width="23" height="17" fill="#ebebeb"/>
<rect x="1083" y="732" width="72" height="17" fill="#ebebeb"/>
<text x="1153.5" y="745.3" font-family="Liberation Sans" font-size="13" text-anchor="end" fill="#111">10 &lt; 100</text>
<rect x="72" y="748.5" width="1083" height="1.2" fill="#bdbdbd"/>
<rect x="72" y="749.7" width="1083" height="20.3" fill="#fff"/>
<rect x="72" y="769.5" width="1083" height="1" fill="#c8c8c8"/>
<text x="77.3" y="762.4" font-family="Liberation Sans" font-size="13.5" fill="#0000cc"><tspan font-style="italic">Commande:</tspan> blockinsert</text>
<rect x="1144" y="749.8" width="7.5" height="18.5" rx="3.5" fill="#808080"/>
<rect x="72" y="770.5" width="1083" height="27" fill="#ebebeb"/>
<text x="73.3" y="789.6" font-family="Liberation Sans" font-size="13" fill="#111">Position :</text>
<rect x="132" y="776" width="993" height="18" fill="#fff"/>
<rect x="1127.5" y="772.5" width="26" height="25" fill="#f2f2f2" stroke="#b8b8b8" stroke-width="1"/>
<rect x="1133.5" y="780" width="14" height="10" fill="#fff" stroke="#111" stroke-width="1"/>
<rect x="1133.5" y="780" width="14" height="2.5" fill="#111"/>
<rect x="72" y="797" width="1083" height="1" fill="#c8c8c8"/>
<rect x="71" y="732" width="1" height="66" fill="#8a8a8a"/>
</svg>

<div id="dock" class="a"></div>
<svg class="a" style="left:1155px;top:107px" width="345" height="693" viewBox="1155 107 345 693">
<defs>
<linearGradient id="ttl" x1="0" y1="0" x2="0" y2="1"><stop offset="0" stop-color="#ececec"/><stop offset="1" stop-color="#dcdcdc"/></linearGradient>
<linearGradient id="dbt" x1="0" y1="0" x2="0" y2="1"><stop offset="0" stop-color="#ececec"/><stop offset="0.35" stop-color="#f6f6f6"/><stop offset="1" stop-color="#ececec"/></linearGradient>
<g id="eye"><ellipse cx="0" cy="0" rx="7.2" ry="5.3" fill="currentColor"/><path d="M-7.6,-0.5 L-6.5,0 M7.6,0.5 L6.5,0" stroke="currentColor" stroke-width="1.2"/><path d="M-4.2,-1.2 A4.2,4.2 0 0 0 4.2,-1.2" fill="none" stroke="#fff" stroke-width="1.7"/><circle cx="-0.9" cy="-0.9" r="0.8" fill="#888"/></g>
<g id="pen"><path d="M0,0 L1.2,-3.5 L11,-13.3 L13.3,-11 L3.5,-1.2 Z" fill="#e9b040" stroke="#8a6010" stroke-width="0.6"/><path d="M0,0 L1.2,-3.5 L3.5,-1.2 Z" fill="#f0d8a8"/><path d="M10.2,-12.5 L12.5,-10.2" stroke="#e02020" stroke-width="2.4"/></g>
<g id="xcl"><circle cx="0" cy="0" r="7" fill="#6e6e6e"/><path d="M-3.2,-3.2 L3.2,3.2 M3.2,-3.2 L-3.2,3.2" stroke="#fff" stroke-width="2"/></g>
<g id="flt"><circle cx="0" cy="0" r="7" fill="#6e6e6e"/><rect x="-1.5" y="-3.8" width="5.5" height="4.3" fill="none" stroke="#fff" stroke-width="1.1"/><rect x="-4" y="-1.2" width="5.5" height="4.5" fill="#6e6e6e" stroke="#fff" stroke-width="1.1"/></g>
<g id="lock"><path d="M-3.3,-1 V-4 A3.3,3.3 0 0 1 3.3,-4 V-1" fill="none" stroke="#c0c0c0" stroke-width="1.4"/><rect x="-4.5" y="-1" width="9" height="7" rx="0.8" fill="#c0c0c0"/></g>
</defs>
<rect x="1155" y="108" width="300" height="22" fill="url(#ttl)"/>
<path d="M1155,129.5 H1455" stroke="#c8c8c8"/>
<use href="#xcl" x="1163.8" y="118.2"/><use href="#flt" x="1182" y="118.2"/>
<text x="1322" y="123" font-family="Liberation Sans" font-size="12" text-anchor="middle" fill="#222">Liste des blocs</text>
<rect x="1155" y="130" width="300" height="27" fill="#e4e4e4"/>
<rect x="1156.0" y="130.7" width="36.4" height="24.6" fill="url(#dbt)" stroke="#a6a6a6" stroke-width="1"/>
<rect x="1193.4" y="130.7" width="36.5" height="24.6" fill="url(#dbt)" stroke="#a6a6a6" stroke-width="1"/>
<rect x="1230.9" y="130.7" width="36.2" height="24.6" fill="url(#dbt)" stroke="#a6a6a6" stroke-width="1"/>
<rect x="1268.1" y="130.7" width="36.8" height="24.6" fill="url(#dbt)" stroke="#a6a6a6" stroke-width="1"/>
<rect x="1305.9" y="130.7" width="36.3" height="24.6" fill="url(#dbt)" stroke="#a6a6a6" stroke-width="1"/>
<rect x="1343.2" y="130.7" width="36.5" height="24.6" fill="url(#dbt)" stroke="#a6a6a6" stroke-width="1"/>
<rect x="1380.7" y="129.5" width="36.7" height="27.5" rx="5" fill="#b7b7b7"/>
<rect x="1417.9" y="130.7" width="36.3" height="24.6" fill="url(#dbt)" stroke="#a6a6a6" stroke-width="1"/>
<use href="#eye" x="1174.2" y="143.1" color="#000"/>
<use href="#eye" x="1211.7" y="143.1" color="#a8a8a8"/>
<path d="M1243.0,143.1 H1255.0 M1249.0,137.1 V149.1" stroke="#f00000" stroke-width="3"/>
<path d="M1280.5,143.1 H1292.5" stroke="#f00000" stroke-width="3"/>
<text x="1316.5" y="147" font-family="Liberation Sans" font-size="12.5" fill="#111">a</text><path d="M1324.3,135.5 V149" stroke="#111" stroke-width="0.9"/><text x="1325" y="147" font-family="Liberation Sans" font-size="12.5" fill="#111">b</text>
<use href="#pen" x="1354.5" y="149.5"/>
<rect x="1393.5" y="136" width="11.5" height="13" fill="#e4e4e4" stroke="#a0a0a0" stroke-width="0.6"/>
<path d="M1395,139 C1396,136.5 1400,136.5 1401,138 L1401,144 L1403.2,144 L1399.3,148.5 L1395.5,144 L1397.5,144 L1397.5,139.8 C1397,139 1396,139 1395,139Z" fill="#1a3cff"/>
<rect x="1431" y="137.5" width="10.5" height="10.5" fill="#f08060" stroke="#e04a2a" stroke-width="1"/><path d="M1433.5,140 L1439,145.5 M1439,140 L1433.5,145.5" stroke="#fff" stroke-width="1.6"/>
<rect x="1155.5" y="157.5" width="299" height="151" fill="#fff" stroke="#c4c4c4"/>
<rect x="1438" y="158" width="16" height="150" fill="#fafafa"/><path d="M1438.5,158 V308" stroke="#e8e8e8"/>
<rect x="1156" y="258" width="282" height="19.5" fill="#d4d4d4"/>
<rect x="1441" y="160" width="11" height="137" rx="5.5" fill="#808080"/>
<use href="#eye" x="1168.9" y="167.5" color="#000"/>
<text x="1205" y="172.2" font-family="Liberation Sans" font-size="13.4" fill="#111">Model (*Model_Space)</text>
<use href="#eye" x="1168.9" y="187.5" color="#000"/>
<text x="1205" y="192.2" font-family="Liberation Sans" font-size="13.4" fill="#111">Layout1 (*Paper_Space)</text>
<use href="#eye" x="1168.9" y="207.5" color="#000"/>
<text x="1205" y="212.2" font-family="Liberation Sans" font-size="13.4" fill="#111">Arbre A</text>
<use href="#eye" x="1168.9" y="227.5" color="#000"/>
<text x="1205" y="232.2" font-family="Liberation Sans" font-size="13.4" fill="#111">Arbre B</text>
<use href="#eye" x="1168.9" y="247.5" color="#000"/>
<text x="1205" y="252.2" font-family="Liberation Sans" font-size="13.4" fill="#111">Banc</text>
<use href="#eye" x="1168.9" y="267.5" color="#3c4c5c"/>
<text x="1205" y="272.2" font-family="Liberation Sans" font-size="13.4" fill="#111">Bordure</text>
<use href="#eye" x="1168.9" y="287.5" color="#000"/>
<text x="1205" y="292.2" font-family="Liberation Sans" font-size="13.4" fill="#111">Poubelle</text>
<use href="#eye" x="1168.9" y="307.5" color="#000"/>
<text x="1205" y="312.2" font-family="Liberation Sans" font-size="13.4" fill="#111">Titre</text>
<use href="#pen" x="1185" y="174.5"/>
<rect x="1155" y="308" width="283" height="1" fill="#c4c4c4"/>
<rect x="1155" y="309" width="300" height="23" fill="url(#ttl)"/>
<path d="M1155,331.5 H1455" stroke="#c8c8c8"/>
<use href="#xcl" x="1163.8" y="320.1"/><use href="#flt" x="1182" y="320.1"/>
<text x="1322" y="325" font-family="Liberation Sans" font-size="12" text-anchor="middle" fill="#222">Liste des calques</text>
<rect x="1155" y="332" width="300" height="26" fill="#e4e4e4"/>
<rect x="1156.1" y="332.8" width="58.3" height="24" fill="url(#dbt)" stroke="#a0a0a0" stroke-width="1.2"/>
<rect x="1215.6" y="332.8" width="58.8" height="24" fill="url(#dbt)" stroke="#a0a0a0" stroke-width="1.2"/>
<rect x="1275.6" y="332.8" width="58.8" height="24" fill="url(#dbt)" stroke="#a0a0a0" stroke-width="1.2"/>
<rect x="1335.6" y="332.8" width="58.8" height="24" fill="url(#dbt)" stroke="#a0a0a0" stroke-width="1.2"/>
<rect x="1395.6" y="332.8" width="58.5" height="24" fill="url(#dbt)" stroke="#a0a0a0" stroke-width="1.2"/>
<use href="#eye" x="1185.2" y="344.5" color="#000"/>
<use href="#eye" x="1245.0" y="344.5" color="#a8a8a8"/>
<path d="M1299.0,344.5 H1311.0 M1305.0,338.5 V350.5" stroke="#f00000" stroke-width="3"/>
<path d="M1359.0,344.5 H1371.0" stroke="#f00000" stroke-width="3"/>
<use href="#pen" x="1418.3" y="351"/>
<rect x="1155.5" y="358.5" width="299" height="440" fill="#fff" stroke="#c4c4c4"/>
<rect x="1161.5" y="365.0" width="15" height="8.5" fill="#fff" stroke="#000" stroke-width="1"/>
<text x="1183" y="373.7" font-family="Liberation Sans" font-size="13.4" fill="#111">0</text>
<use href="#eye" x="1422.5" y="369.0" color="#000"/>
<use href="#lock" x="1445" y="369.0"/>
<rect x="1161.5" y="385.0" width="15" height="8.5" fill="#000" stroke="#000" stroke-width="1"/>
<text x="1183" y="393.7" font-family="Liberation Sans" font-size="13.4" fill="#111">Bordure</text>
<use href="#eye" x="1422.5" y="389.0" color="#000"/>
<use href="#lock" x="1445" y="389.0"/>
<rect x="1161.5" y="405.0" width="15" height="8.5" fill="#d8b060" stroke="#000" stroke-width="1"/>
<text x="1183" y="413.7" font-family="Liberation Sans" font-size="13.4" fill="#111">Chemins</text>
<use href="#eye" x="1422.5" y="409.0" color="#000"/>
<use href="#lock" x="1445" y="409.0"/>
<rect x="1161.5" y="425.0" width="15" height="8.5" fill="#c0c0c0" stroke="#000" stroke-width="1"/>
<text x="1183" y="433.7" font-family="Liberation Sans" font-size="13.4" fill="#111">Installations</text>
<use href="#eye" x="1422.5" y="429.0" color="#000"/>
<use href="#lock" x="1445" y="429.0"/>
<rect x="1161.5" y="445.0" width="15" height="8.5" fill="#6a9e3a" stroke="#000" stroke-width="1"/>
<text x="1183" y="453.7" font-family="Liberation Sans" font-size="13.4" fill="#111">Plantes</text>
<use href="#eye" x="1422.5" y="449.0" color="#000"/>
<use href="#lock" x="1445" y="449.0"/>
<rect x="1161.5" y="465.0" width="15" height="8.5" fill="#000" stroke="#000" stroke-width="1"/>
<text x="1183" y="473.7" font-family="Liberation Sans" font-size="13.4" fill="#111">Titre</text>
<use href="#eye" x="1422.5" y="469.0" color="#000"/>
<use href="#lock" x="1445" y="469.0"/>
<use href="#pen" x="1394" y="395.5"/>
</svg>
<div id="rtb" class="a"></div>
<svg class="a" style="left:1455px;top:107px" width="45" height="693" viewBox="1455 107 45 693">
<g fill="#a8a8a8"><rect x="1462" y="116" width="2" height="2"/><rect x="1468" y="116" width="2" height="2"/><rect x="1474" y="116" width="2" height="2"/><rect x="1480" y="116" width="2" height="2"/><rect x="1486" y="116" width="2" height="2"/></g>
<g fill="#a0a0a0"><rect x="1456" y="262" width="1" height="1"/><rect x="1459" y="262" width="1" height="1"/><rect x="1462" y="262" width="1" height="1"/><rect x="1465" y="262" width="1" height="1"/><rect x="1468" y="262" width="1" height="1"/><rect x="1471" y="262" width="1" height="1"/><rect x="1474" y="262" width="1" height="1"/><rect x="1477" y="262" width="1" height="1"/><rect x="1480" y="262" width="1" height="1"/><rect x="1483" y="262" width="1" height="1"/><rect x="1486" y="262" width="1" height="1"/><rect x="1489" y="262" width="1" height="1"/><rect x="1492" y="262" width="1" height="1"/><rect x="1495" y="262" width="1" height="1"/><rect x="1498" y="262" width="1" height="1"/><rect x="1456" y="410" width="1" height="1"/><rect x="1459" y="410" width="1" height="1"/><rect x="1462" y="410" width="1" height="1"/><rect x="1465" y="410" width="1" height="1"/><rect x="1468" y="410" width="1" height="1"/><rect x="1471" y="410" width="1" height="1"/><rect x="1474" y="410" width="1" height="1"/><rect x="1477" y="410" width="1" height="1"/><rect x="1480" y="410" width="1" height="1"/><rect x="1483" y="410" width="1" height="1"/><rect x="1486" y="410" width="1" height="1"/><rect x="1489" y="410" width="1" height="1"/><rect x="1492" y="410" width="1" height="1"/><rect x="1495" y="410" width="1" height="1"/><rect x="1498" y="410" width="1" height="1"/></g>
<rect x="1456" y="120" width="43" height="42" rx="6" fill="#b8b8b8"/>
<rect x="1456" y="167" width="43" height="42" rx="6" fill="#b8b8b8"/>
<rect x="1456" y="418.5" width="43" height="41.5" rx="6" fill="#b8b8b8"/>
<rect x="1463.5" y="127.5" width="27" height="27" fill="#fff" stroke="#111" stroke-width="1"/>
<rect x="1463.5" y="127.5" width="27" height="4.5" fill="#111"/>
<rect x="1465" y="128.5" width="3" height="3" fill="#fff"/>
<path d="M1470,140 L1478,135 V147 L1470,151 Z" fill="#d8d8d8" stroke="#333" stroke-width="0.8"/><path d="M1473,139 L1483,133 V145 L1473,150 Z" fill="#fff" stroke="#333" stroke-width="0.8"/><path d="M1476,146 L1481,137 M1476,146 H1481" stroke="#e03030" stroke-width="0.8"/>
<rect x="1463.5" y="174.5" width="27" height="27" fill="#fff" stroke="#111" stroke-width="1"/>
<rect x="1463.5" y="174.5" width="27" height="4.5" fill="#111"/>
<rect x="1465" y="175.5" width="3" height="3" fill="#fff"/>
<rect x="1469.5" y="183.5" width="10" height="8" fill="#fff2c8" stroke="#333" stroke-width="0.8"/><circle cx="1479" cy="192" r="4.8" fill="#fff2c8" stroke="#333" stroke-width="0.8" fill-opacity="0.8"/>
<rect x="1463.5" y="221.5" width="27" height="27" fill="#fff" stroke="#111" stroke-width="1"/>
<rect x="1463.5" y="221.5" width="27" height="4.5" fill="#111"/>
<rect x="1465" y="222.5" width="3" height="3" fill="#fff"/>
<rect x="1468.5" y="232" width="17" height="10" rx="2" fill="#f2f6fa" stroke="#b8cce0" stroke-width="0.9"/>
<rect x="1463.5" y="277.5" width="27" height="27" fill="#fff" stroke="#111" stroke-width="1"/>
<rect x="1463.5" y="277.5" width="27" height="4.5" fill="#111"/>
<rect x="1465" y="278.5" width="3" height="3" fill="#fff"/>
<rect x="1467" y="285" width="4" height="3" fill="#111"/><rect x="1473.5" y="284.5" width="13.5" height="4" fill="#fff" stroke="#333" stroke-width="0.7"/>
<rect x="1467" y="291" width="4" height="3" fill="#111"/><rect x="1473.5" y="290.5" width="13.5" height="4" fill="#fff" stroke="#333" stroke-width="0.7"/>
<rect x="1467" y="297" width="4" height="3" fill="#111"/><rect x="1473.5" y="296.5" width="13.5" height="4" fill="#fff" stroke="#333" stroke-width="0.7"/>
<rect x="1463.5" y="323.5" width="27" height="27" fill="#fff" stroke="#111" stroke-width="1"/>
<rect x="1463.5" y="323.5" width="27" height="4.5" fill="#111"/>
<rect x="1465" y="324.5" width="3" height="3" fill="#fff"/>
<path d="M1470,333 Q1477.5,330 1485,333 L1479,340 V346 L1476,344 V340 Z" fill="#b8b8b8" stroke="#555" stroke-width="0.8"/><ellipse cx="1477.5" cy="333" rx="7.5" ry="1.6" fill="#888"/>
<rect x="1463.5" y="369.0" width="27" height="27" fill="#fff" stroke="#111" stroke-width="1"/>
<rect x="1463.5" y="369.0" width="27" height="4.5" fill="#111"/>
<rect x="1465" y="370.0" width="3" height="3" fill="#fff"/>
<path d="M1469,378 L1474,381 H1483 Q1486,381 1486,384 V388 Q1486,391 1483,391 H1474 L1469,394 Z" fill="#e6e6e6" stroke="#666" stroke-width="0.8"/><path d="M1466,386 H1488" stroke="#f0a0a0" stroke-width="0.8" stroke-dasharray="1.5 1"/>
<rect x="1463.5" y="425.9" width="27" height="27" fill="#fff" stroke="#111" stroke-width="1"/>
<rect x="1463.5" y="425.9" width="27" height="4.5" fill="#111"/>
<rect x="1465" y="426.9" width="3" height="3" fill="#fff"/>
<g stroke="#aaa" stroke-width="0.7"><path d="M1466,433 H1476 M1466,436.5 H1474 M1466,440 H1477 M1466,443.5 H1478"/></g><path d="M1463.5,447.5 H1490.5" stroke="#333" stroke-width="0.7"/><path d="M1467,450.5 H1470 M1474,450.5 H1488" stroke="#555" stroke-width="0.8"/>
<rect x="1463.5" y="472.8" width="27" height="27" fill="#fff" stroke="#111" stroke-width="1"/>
<rect x="1463.5" y="472.8" width="27" height="4.5" fill="#111"/>
<rect x="1465" y="473.8" width="3" height="3" fill="#fff"/>
<rect x="1470" y="481.5" width="14" height="14" rx="1" fill="#f2f2f2" stroke="#c6821a" stroke-width="1.5"/><rect x="1474" y="479.8" width="6" height="3" fill="#999"/>
</svg>
<div id="sb" class="a"></div>
<svg class="a" style="left:0;top:798px" width="1500" height="46" viewBox="0 798 1500 46">
<g font-family="Liberation Sans" font-size="10.2" fill="#1a1a1a">
<text x="2.4" y="815.6">0,-20</text>
<text x="2.4" y="836">@0,-20</text>
<text x="256.5" y="815.6">20&lt;270°</text>
<text x="256.5" y="836">@20&lt;270°</text>
<text x="662" y="825.5">Position</text>
<text x="754" y="825.5">Annuler</text>
<text x="949" y="825.5">Aucune des entités sélectionnées.</text>
</g>
<path d="M253.5,802 V842" stroke="#8a8a8a" stroke-width="1"/>
<circle cx="509.5" cy="822" r="2.6" fill="#c4c4c4"/>
<circle cx="942.5" cy="822" r="2.6" fill="#c4c4c4"/>
<circle cx="1272" cy="822" r="2.6" fill="#c4c4c4"/>
<path d="M717.5,816 C717.5,810 721,807.5 726,807.5 C731,807.5 734.5,810 734.5,816 V827 C734.5,833 731,836 726,836 C721,836 717.5,833 717.5,827 Z" fill="#fff" stroke="#222" stroke-width="0.9"/>
<path d="M717.5,820 H734.5 M726,807.5 V820" stroke="#222" stroke-width="0.9"/>
<rect x="724" y="810" width="4" height="7" rx="2" fill="#fff" stroke="#222" stroke-width="0.8"/>
</svg>

</body></html>
